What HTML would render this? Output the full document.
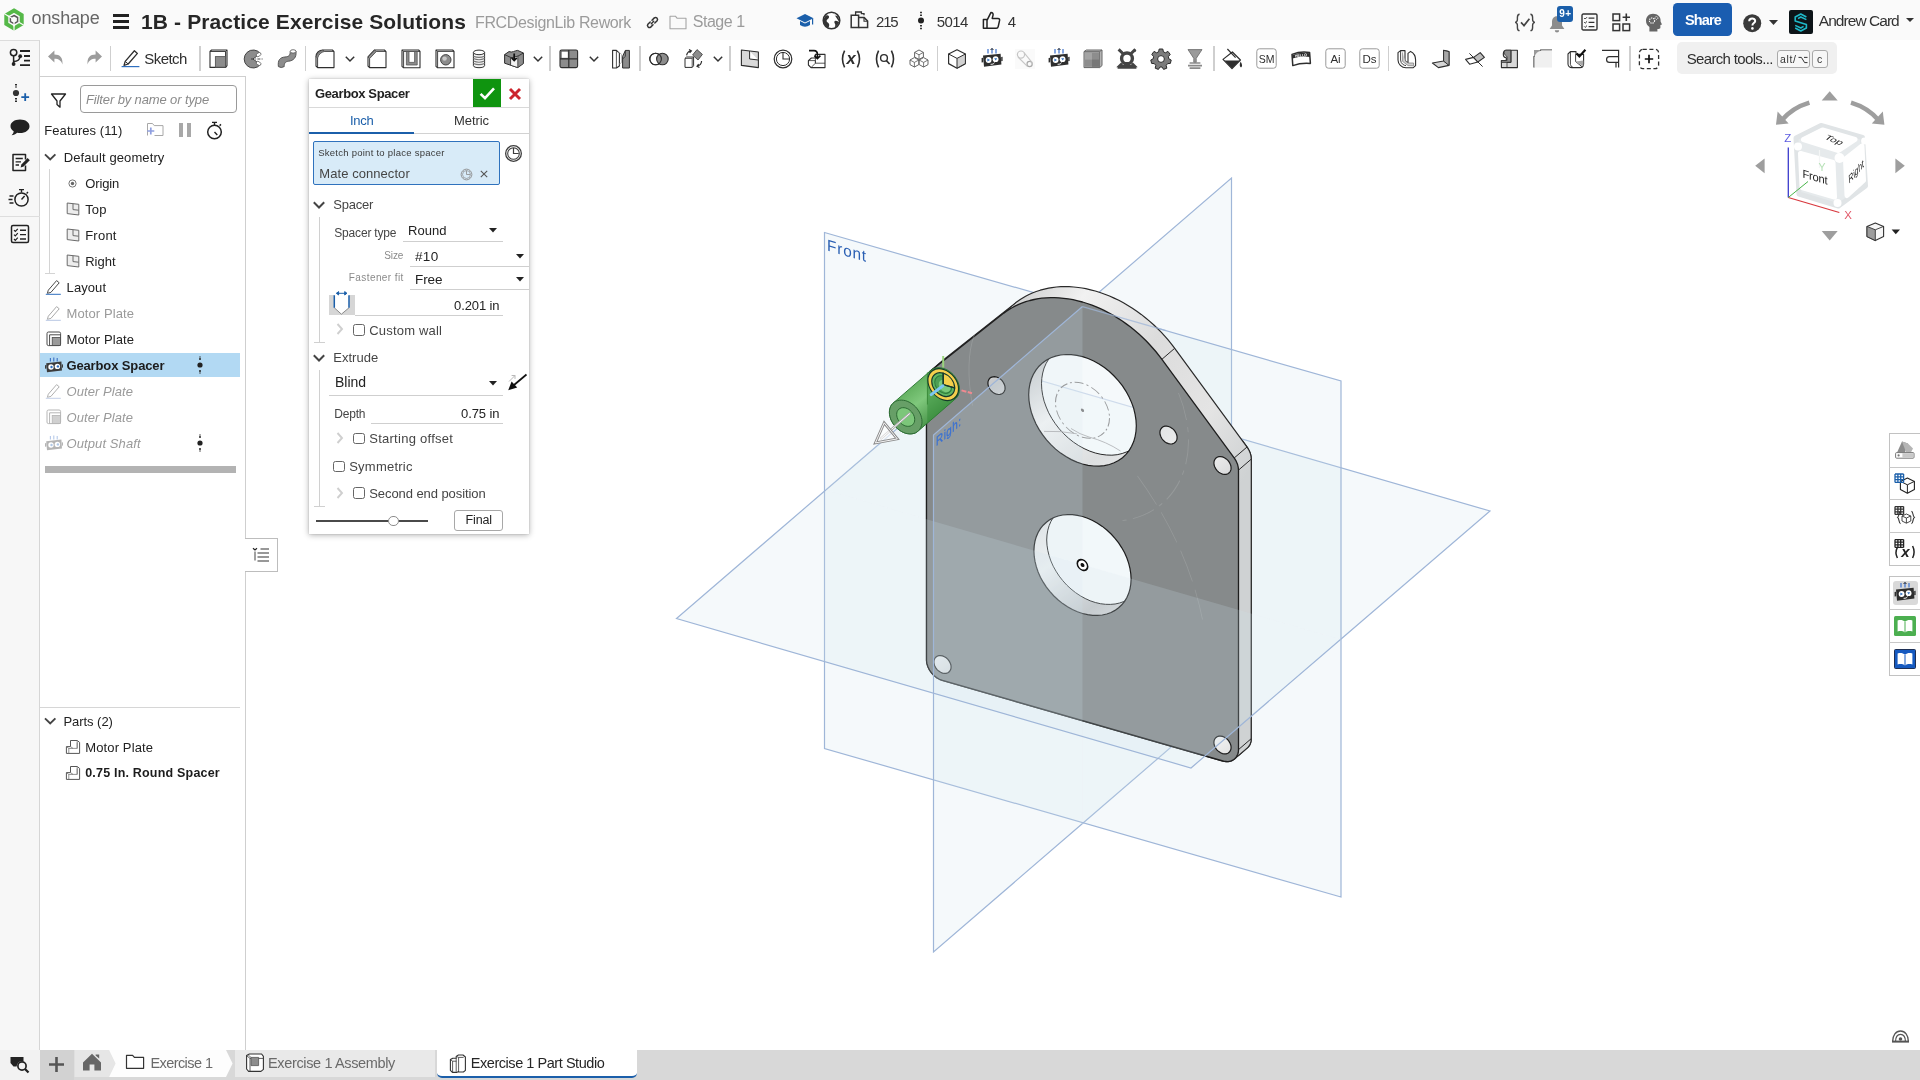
<!DOCTYPE html>
<html lang="en"><head><meta charset="utf-8"><title>1B - Practice Exercise Solutions | Exercise 1 Part Studio</title>
<style>
html,body{margin:0;padding:0;}
body{width:1920px;height:1080px;overflow:hidden;background:#fff;position:relative;font-family:"Liberation Sans",sans-serif;}
.a{position:absolute;box-sizing:border-box;}
.t{position:absolute;white-space:pre;line-height:1;}
svg{overflow:visible;}
svg text{font-family:"Liberation Sans",sans-serif;}
</style></head><body>
<div id="app" style="position:absolute;left:0;top:0;width:1920px;height:1080px;will-change:transform;">

<!-- 10_chrome -->
<div class="a" style="left:0px;top:0px;width:1920px;height:40px;background:#fafafa;"></div><div class="a" style="left:40px;top:40px;width:1880px;height:36px;background:#ffffff;"></div><div class="a" style="left:40px;top:76px;width:206px;height:1px;background:#cfcfcf;"></div><div class="a" style="left:0px;top:40px;width:40px;height:1040px;background:#f7f7f7;border-top:1px solid #dcdcdc;border-right:1px solid #d6d6d6;"></div><div class="a" style="left:0px;top:216px;width:40px;height:1px;background:#dedede;"></div><div class="a" style="left:40px;top:77px;width:206px;height:973px;background:#ffffff;border-right:1px solid #cfcfcf;"></div><div class="a" style="left:0px;top:1050px;width:1920px;height:30px;background:#e1e1e1;"></div><div class="a" style="left:0px;top:1050px;width:40px;height:30px;background:#f2f2f2;"></div>
<!-- 20_scene -->
<svg class="a" style="left:0;top:0" width="1920" height="1080" viewBox="0 0 1920 1080"><defs>
<linearGradient id="rimg" gradientUnits="userSpaceOnUse" x1="1000" y1="300" x2="1250" y2="470"><stop offset="0" stop-color="#c9caca"/><stop offset=".22" stop-color="#f1f1f1"/><stop offset=".5" stop-color="#dcdcdc"/><stop offset=".78" stop-color="#e4e4e4"/><stop offset="1" stop-color="#cfd2d3"/></linearGradient>
<linearGradient id="wallg" gradientUnits="userSpaceOnUse" x1="1030" y1="360" x2="1100" y2="455" spreadMethod="reflect"><stop offset="0" stop-color="#c4c6c8"/><stop offset=".5" stop-color="#f4f4f4"/><stop offset="1" stop-color="#dddfe0"/></linearGradient>
<path id="pHF" d="M1131.1 579.0 L1130.8 584.0 L1130.0 588.8 L1128.7 593.3 L1126.9 597.5 L1124.6 601.4 L1121.8 604.8 L1118.6 607.8 L1115.0 610.4 L1111.1 612.5 L1106.8 614.0 L1102.3 615.0 L1097.5 615.4 L1092.6 615.3 L1087.6 614.7 L1082.5 613.5 L1077.4 611.8 L1072.4 609.5 L1067.5 606.8 L1062.7 603.6 L1058.2 600.0 L1053.9 596.0 L1050.0 591.7 L1046.4 587.1 L1043.2 582.2 L1040.4 577.2 L1038.1 572.0 L1036.3 566.7 L1035.0 561.4 L1034.2 556.2 L1033.9 551.0 L1034.2 546.0 L1035.0 541.2 L1036.3 536.7 L1038.1 532.5 L1040.4 528.6 L1043.2 525.2 L1046.4 522.2 L1050.0 519.6 L1053.9 517.5 L1058.2 516.0 L1062.7 515.0 L1067.5 514.6 L1072.4 514.7 L1077.4 515.3 L1082.5 516.5 L1087.6 518.2 L1092.6 520.5 L1097.5 523.2 L1102.3 526.4 L1106.8 530.0 L1111.1 534.0 L1115.0 538.3 L1118.6 542.9 L1121.8 547.8 L1124.6 552.8 L1126.9 558.0 L1128.7 563.3 L1130.0 568.6 L1130.8 573.8Z M1136.3 425.8 L1136.0 431.3 L1135.1 436.6 L1133.7 441.6 L1131.6 446.3 L1129.1 450.6 L1126.0 454.4 L1122.5 457.7 L1118.5 460.6 L1114.1 462.8 L1109.4 464.5 L1104.4 465.7 L1099.1 466.2 L1093.7 466.0 L1088.1 465.3 L1082.5 464.0 L1076.9 462.1 L1071.3 459.6 L1065.9 456.6 L1060.6 453.1 L1055.6 449.1 L1050.9 444.7 L1046.5 439.9 L1042.5 434.7 L1039.0 429.4 L1035.9 423.8 L1033.4 418.0 L1031.3 412.2 L1029.9 406.3 L1029.0 400.5 L1028.7 394.8 L1029.0 389.3 L1029.9 384.0 L1031.3 379.0 L1033.4 374.3 L1035.9 370.1 L1039.0 366.2 L1042.5 362.9 L1046.5 360.1 L1050.9 357.8 L1055.6 356.1 L1060.6 355.0 L1065.9 354.5 L1071.3 354.6 L1076.9 355.3 L1082.5 356.6 L1088.1 358.5 L1093.7 361.0 L1099.1 364.0 L1104.4 367.6 L1109.4 371.5 L1114.1 376.0 L1118.5 380.8 L1122.5 385.9 L1126.0 391.3 L1129.1 396.9 L1131.6 402.6 L1133.7 408.4 L1135.1 414.3 L1136.0 420.1Z M1231.1 468.0 L1230.9 469.9 L1230.2 471.5 L1229.2 472.8 L1227.9 473.8 L1226.2 474.3 L1224.4 474.4 L1222.5 474.1 L1220.6 473.3 L1218.8 472.2 L1217.1 470.7 L1215.8 468.9 L1214.8 467.0 L1214.1 465.0 L1213.9 463.1 L1214.1 461.2 L1214.8 459.6 L1215.8 458.2 L1217.1 457.3 L1218.8 456.7 L1220.6 456.6 L1222.5 456.9 L1224.4 457.7 L1226.2 458.9 L1227.9 460.4 L1229.2 462.1 L1230.2 464.0 L1230.9 466.0Z M1231.1 747.4 L1230.9 749.3 L1230.2 750.9 L1229.2 752.3 L1227.9 753.2 L1226.2 753.8 L1224.4 753.9 L1222.5 753.6 L1220.6 752.8 L1218.8 751.6 L1217.1 750.1 L1215.8 748.4 L1214.8 746.5 L1214.1 744.5 L1213.9 742.5 L1214.1 740.6 L1214.8 739.0 L1215.8 737.7 L1217.1 736.7 L1218.8 736.2 L1220.6 736.1 L1222.5 736.4 L1224.4 737.2 L1226.2 738.3 L1227.9 739.8 L1229.2 741.6 L1230.2 743.5 L1230.9 745.5Z M951.1 666.9 L950.9 668.8 L950.2 670.4 L949.2 671.8 L947.9 672.7 L946.2 673.3 L944.4 673.4 L942.5 673.1 L940.6 672.3 L938.8 671.1 L937.1 669.6 L935.8 667.9 L934.8 666.0 L934.1 664.0 L933.9 662.0 L934.1 660.1 L934.8 658.5 L935.8 657.2 L937.1 656.2 L938.8 655.7 L940.6 655.6 L942.5 655.9 L944.4 656.7 L946.2 657.8 L947.9 659.3 L949.2 661.1 L950.2 663.0 L950.9 665.0Z M951.1 387.5 L950.9 389.4 L950.2 391.0 L949.2 392.3 L947.9 393.3 L946.2 393.8 L944.4 393.9 L942.5 393.6 L940.6 392.8 L938.8 391.7 L937.1 390.2 L935.8 388.4 L934.8 386.5 L934.1 384.5 L933.9 382.6 L934.1 380.7 L934.8 379.1 L935.8 377.7 L937.1 376.8 L938.8 376.2 L940.6 376.1 L942.5 376.4 L944.4 377.2 L946.2 378.4 L947.9 379.9 L949.2 381.6 L950.2 383.5 L950.9 385.5Z M1177.1 437.5 L1176.9 439.4 L1176.2 441.0 L1175.2 442.3 L1173.9 443.3 L1172.2 443.8 L1170.4 444.0 L1168.5 443.6 L1166.6 442.9 L1164.8 441.7 L1163.1 440.2 L1161.8 438.5 L1160.8 436.5 L1160.1 434.5 L1159.9 432.6 L1160.1 430.7 L1160.8 429.1 L1161.8 427.8 L1163.1 426.8 L1164.8 426.2 L1166.6 426.1 L1168.5 426.5 L1170.4 427.2 L1172.2 428.4 L1173.9 429.9 L1175.2 431.6 L1176.2 433.5 L1176.9 435.5Z M1005.1 388.1 L1004.9 389.9 L1004.2 391.5 L1003.2 392.9 L1001.9 393.8 L1000.2 394.4 L998.4 394.5 L996.5 394.2 L994.6 393.4 L992.8 392.2 L991.1 390.8 L989.8 389.0 L988.8 387.1 L988.1 385.1 L987.9 383.1 L988.1 381.3 L988.8 379.6 L989.8 378.3 L991.1 377.3 L992.8 376.8 L994.6 376.7 L996.5 377.0 L998.4 377.8 L1000.2 378.9 L1001.9 380.4 L1003.2 382.2 L1004.2 384.1 L1004.9 386.1Z"/><path id="pHB" d="M1143.9 568.0 L1143.6 573.0 L1142.8 577.8 L1141.5 582.3 L1139.7 586.5 L1137.4 590.4 L1134.6 593.8 L1131.4 596.8 L1127.8 599.4 L1123.9 601.5 L1119.6 603.0 L1115.1 604.0 L1110.3 604.4 L1105.4 604.3 L1100.4 603.7 L1095.3 602.5 L1090.2 600.8 L1085.2 598.5 L1080.3 595.8 L1075.5 592.6 L1071.0 589.0 L1066.7 585.0 L1062.8 580.7 L1059.2 576.1 L1056.0 571.2 L1053.2 566.2 L1050.9 561.0 L1049.1 555.7 L1047.8 550.4 L1047.0 545.2 L1046.7 540.0 L1047.0 535.0 L1047.8 530.2 L1049.1 525.7 L1050.9 521.5 L1053.2 517.6 L1056.0 514.2 L1059.2 511.2 L1062.8 508.6 L1066.7 506.5 L1071.0 505.0 L1075.5 504.0 L1080.3 503.6 L1085.2 503.7 L1090.2 504.3 L1095.3 505.5 L1100.4 507.2 L1105.4 509.5 L1110.3 512.2 L1115.1 515.4 L1119.6 519.0 L1123.9 523.0 L1127.8 527.3 L1131.4 531.9 L1134.6 536.8 L1137.4 541.8 L1139.7 547.0 L1141.5 552.3 L1142.8 557.6 L1143.6 562.8Z M1149.1 414.8 L1148.8 420.3 L1147.9 425.6 L1146.5 430.6 L1144.4 435.3 L1141.9 439.6 L1138.8 443.4 L1135.3 446.7 L1131.3 449.6 L1126.9 451.8 L1122.2 453.5 L1117.2 454.7 L1111.9 455.2 L1106.5 455.0 L1100.9 454.3 L1095.3 453.0 L1089.7 451.1 L1084.1 448.6 L1078.7 445.6 L1073.4 442.1 L1068.4 438.1 L1063.7 433.7 L1059.3 428.9 L1055.3 423.7 L1051.8 418.4 L1048.7 412.8 L1046.2 407.0 L1044.1 401.2 L1042.7 395.3 L1041.8 389.5 L1041.5 383.8 L1041.8 378.3 L1042.7 373.0 L1044.1 368.0 L1046.2 363.3 L1048.7 359.1 L1051.8 355.2 L1055.3 351.9 L1059.3 349.1 L1063.7 346.8 L1068.4 345.1 L1073.4 344.0 L1078.7 343.5 L1084.1 343.6 L1089.7 344.3 L1095.3 345.6 L1100.9 347.5 L1106.5 350.0 L1111.9 353.0 L1117.2 356.6 L1122.2 360.5 L1126.9 365.0 L1131.3 369.8 L1135.3 374.9 L1138.8 380.3 L1141.9 385.9 L1144.4 391.6 L1146.5 397.4 L1147.9 403.3 L1148.8 409.1Z M1243.9 457.0 L1243.7 458.9 L1243.0 460.5 L1242.0 461.8 L1240.7 462.8 L1239.0 463.3 L1237.2 463.4 L1235.3 463.1 L1233.4 462.3 L1231.6 461.2 L1229.9 459.7 L1228.6 457.9 L1227.6 456.0 L1226.9 454.0 L1226.7 452.1 L1226.9 450.2 L1227.6 448.6 L1228.6 447.2 L1229.9 446.3 L1231.6 445.7 L1233.4 445.6 L1235.3 445.9 L1237.2 446.7 L1239.0 447.9 L1240.7 449.4 L1242.0 451.1 L1243.0 453.0 L1243.7 455.0Z M1243.9 736.4 L1243.7 738.3 L1243.0 739.9 L1242.0 741.3 L1240.7 742.2 L1239.0 742.8 L1237.2 742.9 L1235.3 742.6 L1233.4 741.8 L1231.6 740.6 L1229.9 739.1 L1228.6 737.4 L1227.6 735.5 L1226.9 733.5 L1226.7 731.5 L1226.9 729.6 L1227.6 728.0 L1228.6 726.7 L1229.9 725.7 L1231.6 725.2 L1233.4 725.1 L1235.3 725.4 L1237.2 726.2 L1239.0 727.3 L1240.7 728.8 L1242.0 730.6 L1243.0 732.5 L1243.7 734.5Z M963.9 655.9 L963.7 657.8 L963.0 659.4 L962.0 660.8 L960.7 661.7 L959.0 662.3 L957.2 662.4 L955.3 662.1 L953.4 661.3 L951.6 660.1 L949.9 658.6 L948.6 656.9 L947.6 655.0 L946.9 653.0 L946.7 651.0 L946.9 649.1 L947.6 647.5 L948.6 646.2 L949.9 645.2 L951.6 644.7 L953.4 644.6 L955.3 644.9 L957.2 645.7 L959.0 646.8 L960.7 648.3 L962.0 650.1 L963.0 652.0 L963.7 654.0Z M963.9 376.5 L963.7 378.4 L963.0 380.0 L962.0 381.3 L960.7 382.3 L959.0 382.8 L957.2 382.9 L955.3 382.6 L953.4 381.8 L951.6 380.7 L949.9 379.2 L948.6 377.4 L947.6 375.5 L946.9 373.5 L946.7 371.6 L946.9 369.7 L947.6 368.1 L948.6 366.7 L949.9 365.8 L951.6 365.2 L953.4 365.1 L955.3 365.4 L957.2 366.2 L959.0 367.4 L960.7 368.9 L962.0 370.6 L963.0 372.5 L963.7 374.5Z M1189.9 426.5 L1189.7 428.4 L1189.0 430.0 L1188.0 431.3 L1186.7 432.3 L1185.0 432.8 L1183.2 433.0 L1181.3 432.6 L1179.4 431.9 L1177.6 430.7 L1175.9 429.2 L1174.6 427.5 L1173.6 425.5 L1172.9 423.5 L1172.7 421.6 L1172.9 419.7 L1173.6 418.1 L1174.6 416.8 L1175.9 415.8 L1177.6 415.2 L1179.4 415.1 L1181.3 415.5 L1183.2 416.2 L1185.0 417.4 L1186.7 418.9 L1188.0 420.6 L1189.0 422.5 L1189.7 424.5Z M1017.9 377.1 L1017.7 378.9 L1017.0 380.5 L1016.0 381.9 L1014.7 382.8 L1013.0 383.4 L1011.2 383.5 L1009.3 383.2 L1007.4 382.4 L1005.6 381.2 L1003.9 379.8 L1002.6 378.0 L1001.6 376.1 L1000.9 374.1 L1000.7 372.1 L1000.9 370.3 L1001.6 368.6 L1002.6 367.3 L1003.9 366.3 L1005.6 365.8 L1007.4 365.7 L1009.3 366.0 L1011.2 366.8 L1013.0 367.9 L1014.7 369.4 L1016.0 371.2 L1017.0 373.1 L1017.7 375.1Z"/><path id="pFO" d="M926.5 380.4 L926.8 377.6 L927.5 375.1 L928.1 374.0 L928.8 372.9 L929.6 371.8 L930.5 371.0 L1003.8 313.1 L1006.5 311.2 L1009.2 309.4 L1012.0 307.7 L1015.0 306.1 L1018.7 304.4 L1021.8 303.1 L1025.8 301.7 L1029.9 300.5 L1034.1 299.5 L1038.4 298.7 L1041.9 298.2 L1046.3 297.8 L1050.8 297.6 L1054.4 297.6 L1059.0 297.8 L1063.7 298.3 L1068.3 298.9 L1073.0 299.7 L1077.8 300.8 L1082.5 302.0 L1087.2 303.5 L1092.0 305.2 L1095.7 306.6 L1100.4 308.7 L1104.1 310.4 L1108.7 312.8 L1113.3 315.3 L1117.8 318.1 L1122.3 321.0 L1126.6 324.1 L1130.9 327.3 L1135.1 330.7 L1139.2 334.3 L1142.4 337.2 L1146.3 341.0 L1150.0 345.0 L1155.8 351.5 L1161.2 358.4 L1234.5 458.4 L1236.2 461.2 L1237.5 464.2 L1238.2 467.1 L1238.5 470.1 L1238.5 749.8 L1238.4 751.3 L1238.2 752.8 L1237.8 754.2 L1237.2 755.4 L1236.6 756.6 L1235.8 757.7 L1234.8 758.7 L1233.8 759.5 L1232.7 760.2 L1231.4 760.8 L1230.1 761.2 L1228.8 761.5 L1227.3 761.6 L1225.8 761.5 L1224.3 761.4 L1222.8 761.0 L942.5 680.4 L939.4 679.3 L936.5 677.6 L933.9 675.5 L931.5 672.9 L929.5 670.0 L928.0 667.0 L927.0 663.9 L926.7 662.3 L926.5 660.7Z"/>
<clipPath id="cpHolesF"><use href="#pHF"/></clipPath>
<mask id="mFront" maskUnits="userSpaceOnUse" x="900" y="280" width="380" height="500"><rect x="900" y="280" width="380" height="500" fill="#fff"/><use href="#pHF" fill="#000"/></mask>
<mask id="mWall" maskUnits="userSpaceOnUse" x="900" y="280" width="380" height="500"><use href="#pHF" fill="#fff"/><use href="#pHB" fill="#000"/></mask>
<mask id="mSweep" maskUnits="userSpaceOnUse" x="900" y="270" width="380" height="510"><rect x="900" y="270" width="380" height="510" fill="#fff"/><g clip-path="url(#cpHolesF)"><use href="#pHB" fill="#000"/></g></mask>
<clipPath id="cpRight"><rect x="1238.5" y="440" width="20" height="330"/></clipPath>
</defs>
<polygon points="1082.5,306.5 1231.5,178.0 1231.5,695.0 1082.5,823.5" fill="rgba(207,225,235,0.2)"/>
<polygon points="825.8,490.0 975.0,361.5 1490.0,511.0 1340.5,639.5" fill="rgba(207,225,235,0.2)"/>
<polyline points="1082.5,306.5 1231.5,178.0 1231.5,695.0 1082.5,823.5" fill="none" stroke="#9fb6d8" stroke-width="1.2"/>
<polyline points="825.8,490.0 975.0,361.5 1490.0,511.0 1340.5,639.5" fill="none" stroke="#9fb6d8" stroke-width="1.2"/>
<polygon points="824.5,232.5 1341.0,381.0 1341.0,897.0 824.5,748.5" fill="rgba(207,225,235,0.2)" stroke="#9fb6d8" stroke-width="1.2"/>
<path id="pSW" d="M926.5 380.4 L926.7 378.3 L927.2 376.1 L928.0 374.1 L929.2 372.4 L930.3 371.2 L943.3 360.0 L1015.9 302.6 L1020.6 299.3 L1025.6 296.3 L1028.5 294.8 L1032.3 293.0 L1036.2 291.5 L1040.2 290.2 L1044.4 289.1 L1048.6 288.1 L1052.0 287.6 L1056.4 287.0 L1060.9 286.7 L1065.4 286.6 L1069.1 286.7 L1073.7 287.0 L1078.3 287.5 L1082.1 288.0 L1085.8 288.7 L1090.6 289.8 L1095.3 291.0 L1100.0 292.5 L1104.8 294.2 L1109.5 296.0 L1114.1 298.1 L1118.8 300.3 L1123.4 302.8 L1127.9 305.4 L1132.4 308.2 L1136.8 311.2 L1141.2 314.4 L1145.4 317.7 L1149.5 321.1 L1153.6 324.7 L1157.5 328.5 L1161.4 332.4 L1165.0 336.4 L1167.9 339.7 L1171.3 343.9 L1174.0 347.4 L1247.3 447.4 L1249.0 450.2 L1250.3 453.2 L1251.0 456.1 L1251.3 459.1 L1251.2 739.9 L1250.9 741.9 L1250.3 743.8 L1249.5 745.4 L1248.4 746.9 L1247.4 747.9 L1234.1 759.3 L1233.0 760.0 L1231.8 760.6 L1230.5 761.1 L1229.1 761.4 L1227.7 761.6 L1226.2 761.6 L1224.7 761.4 L1223.2 761.1 L942.2 680.4 L939.2 679.1 L936.2 677.4 L933.6 675.1 L931.2 672.5 L929.2 669.6 L927.8 666.5 L926.8 663.3 L926.6 661.7 L926.5 660.1Z" fill="url(#rimg)" stroke="#2a2a2a" stroke-width="1.2" stroke-linejoin="round" mask="url(#mSweep)"/>
<use href="#pSW" clip-path="url(#cpRight)" fill="#c3c7c9" stroke="none" style="fill:#c3c7c9"/>
<use href="#pHF" fill="#fff" fill-opacity=".45"/>
<rect x="900" y="280" width="380" height="500" fill="url(#wallg)" mask="url(#mWall)"/>
<use href="#pHB" fill="none" stroke="#2a2a2a" stroke-width="1" clip-path="url(#cpHolesF)"/>
<path d="M930.8 370.8l12.8 -11M1003.1 313.6l12.8 -11M1161.9 359.3l12.8 -11M1234.2 458.0l12.8 -11M1238.5 470.1l12.8 -11M1238.5 749.6l12.8 -11" stroke="#2a2a2a" stroke-width="1" fill="none"/>
<use href="#pFO" fill="#868a8b" mask="url(#mFront)"/>
<use href="#pFO" fill="none" stroke="#1e1e1e" stroke-width="1.3" stroke-linejoin="round"/>
<use href="#pHF" fill="none" stroke="#1e1e1e" stroke-width="1.2"/>
<path d="M1082.5 306.6L1166 330.6" stroke="#9fb6d8" stroke-width="1.2" stroke-opacity=".75" fill="none"/>
<g transform="matrix(1 0.2875 0 0.998 1082.5 565)" fill="none" stroke="#b9bcbe" stroke-opacity=".3" stroke-width=".9"><path d="M96 -200A107 107 0 0 1 40 -56" stroke-dasharray="26 7 5 7"/><path d="M55 -105Q105 -50 120 20" stroke-dasharray="30 8"/><path d="M-108 -200Q-118 -170 -110 -128"/></g>
<polygon points="933.5,435.0 1082.5,306.5 1082.5,823.5 933.5,952.0" fill="rgba(207,225,235,0.2)"/>
<polygon points="676.5,618.5 825.8,490.0 1340.5,639.5 1191.0,768.0" fill="rgba(207,225,235,0.2)"/>
<polyline points="1082.5,306.5 933.5,435.0 933.5,952.0 1082.5,823.5" fill="none" stroke="#9fb6d8" stroke-width="1.2"/>
<polyline points="825.8,490.0 676.5,618.5 1191.0,768.0 1340.5,639.5" fill="none" stroke="#9fb6d8" stroke-width="1.2"/></svg>
<!-- 21_spacer -->
<svg class="a" style="left:0;top:0" width="1920" height="1080" viewBox="0 0 1920 1080"><defs><linearGradient id="cylg" gradientUnits="userSpaceOnUse" x1="912" y1="385" x2="936" y2="416"><stop offset="0" stop-color="#62b05f"/><stop offset=".45" stop-color="#7fc87c"/><stop offset="1" stop-color="#4f9a4f"/></linearGradient><clipPath id="cpPl"><rect x="927.3" y="340" width="60" height="100"/></clipPath></defs>
<path d="M889.4 412.3 L889.5 410.2 L889.7 409.2 L890.3 407.3 L890.6 406.4 L891.6 404.8 L892.8 403.4 L930.9 370.4 L931.7 369.8 L933.3 368.8 L935.1 368.2 L937.0 367.8 L939.0 367.7 L941.1 367.9 L943.2 368.3 L945.3 369.1 L947.4 370.1 L949.4 371.4 L951.4 372.9 L953.1 374.5 L954.7 376.4 L956.1 378.4 L957.3 380.5 L958.3 382.7 L958.9 384.9 L959.4 387.1 L959.5 389.3 L959.4 391.4 L958.9 393.3 L958.6 394.3 L957.8 396.0 L957.3 396.8 L956.1 398.2 L918.0 431.2 L916.4 432.3 L915.6 432.8 L913.9 433.4 L911.9 433.8 L909.9 433.9 L907.8 433.7 L905.7 433.3 L903.6 432.5 L901.5 431.5 L899.5 430.2 L897.6 428.7 L895.8 427.1 L894.2 425.2 L892.8 423.2 L891.6 421.1 L890.6 418.9 L890.0 416.7 L889.5 414.5Z" fill="url(#cylg)" stroke="#2f7a36" stroke-width="1" stroke-linejoin="round"/>
<path d="M889.4 412.3 L889.5 410.2 L889.7 409.2 L890.3 407.3 L890.6 406.4 L891.6 404.8 L892.8 403.4 L930.9 370.4 L931.7 369.8 L933.3 368.8 L935.1 368.2 L937.0 367.8 L939.0 367.7 L941.1 367.9 L943.2 368.3 L945.3 369.1 L947.4 370.1 L949.4 371.4 L951.4 372.9 L953.1 374.5 L954.7 376.4 L956.1 378.4 L957.3 380.5 L958.3 382.7 L958.9 384.9 L959.4 387.1 L959.5 389.3 L959.4 391.4 L958.9 393.3 L958.6 394.3 L957.8 396.0 L957.3 396.8 L956.1 398.2 L918.0 431.2 L916.4 432.3 L915.6 432.8 L913.9 433.4 L911.9 433.8 L909.9 433.9 L907.8 433.7 L905.7 433.3 L903.6 432.5 L901.5 431.5 L899.5 430.2 L897.6 428.7 L895.8 427.1 L894.2 425.2 L892.8 423.2 L891.6 421.1 L890.6 418.9 L890.0 416.7 L889.5 414.5Z" fill="#2f8a36" fill-opacity=".5" clip-path="url(#cpPl)"/>
<path d="M927.4 372.5V404.5" stroke="#3b8a3b" stroke-width="1"/>
<path d="M922.0 421.7 L921.9 423.8 L921.4 425.7 L920.8 427.6 L919.8 429.2 L918.6 430.6 L917.2 431.8 L915.6 432.8 L913.9 433.4 L911.9 433.8 L909.9 433.9 L907.8 433.7 L905.7 433.3 L903.6 432.5 L901.5 431.5 L899.5 430.2 L897.6 428.7 L895.8 427.1 L894.2 425.2 L892.8 423.2 L891.6 421.1 L890.6 418.9 L890.0 416.7 L889.5 414.5 L889.4 412.3 L889.5 410.2 L890.0 408.3 L890.6 406.4 L891.6 404.8 L892.8 403.4 L894.2 402.2 L895.8 401.2 L897.6 400.6 L899.5 400.2 L901.5 400.1 L903.6 400.3 L905.7 400.7 L907.8 401.5 L909.9 402.5 L911.9 403.8 L913.9 405.3 L915.6 406.9 L917.2 408.8 L918.6 410.8 L919.8 412.9 L920.8 415.1 L921.4 417.3 L921.9 419.5Z" fill="#679f67" stroke="#2c6a33" stroke-width="1"/>
<path d="M914.7 419.6 L914.6 421.1 L914.2 422.5 L913.5 423.7 L912.6 424.8 L911.5 425.5 L910.2 426.1 L908.8 426.3 L907.3 426.3 L905.7 426.0 L904.1 425.4 L902.6 424.6 L901.2 423.5 L899.9 422.2 L898.8 420.8 L897.9 419.3 L897.2 417.6 L896.8 416.0 L896.7 414.4 L896.8 412.9 L897.2 411.5 L897.9 410.3 L898.8 409.2 L899.9 408.5 L901.2 407.9 L902.6 407.7 L904.1 407.7 L905.7 408.0 L907.3 408.6 L908.8 409.4 L910.2 410.5 L911.5 411.8 L912.6 413.2 L913.5 414.7 L914.2 416.4 L914.6 418.0Z" fill="#7cc67a" stroke="#2c6a33" stroke-width="1"/>
<path d="M909.5 413.7L881 438.5" stroke="#a9a9a9" stroke-width="2.4" stroke-linecap="round"/><path d="M909.5 413.7L881 438.5" stroke="#fff" stroke-width=".9" stroke-linecap="round"/>
<path d="M884.2 422.8L897.3 438.9L875.4 442.9Z" fill="#fff" fill-opacity=".6" stroke="#8c8c8c" stroke-width="2.8" stroke-linejoin="miter"/><path d="M884.2 422.8L897.3 438.9L875.4 442.9Z" fill="none" stroke="#fff" stroke-width=".9"/>
<g transform="matrix(1 0.2875 0 0.998 943.2 384.6)">
<circle r="12" fill="#5fb562"/><circle r="8.5" fill="#4d9f55" stroke="#2d7d3c" stroke-width="1"/><circle cx="1.5" cy="1" r="6" fill="#79c97b"/>
<path d="M0 0L0 -13.4A13.4 13.4 0 0 1 13.4 0Z" fill="#f4cf4c" stroke="#163a2c" stroke-width="1.3" stroke-linejoin="round"/>
<circle r="13.4" fill="none" stroke="#163a2c" stroke-width="5"/><circle r="13.4" fill="none" stroke="#f4cf4c" stroke-width="2.7"/>
<path d="M0 0L0 -12M0 0L12 0" stroke="#163a2c" stroke-width="1.3" fill="none"/>
</g>
<path d="M943.2 356V367.5" stroke="#9ad57c" stroke-width="2"/>
<path d="M943 385.8L931.2 394.6" stroke="#7cc6f2" stroke-width="3" stroke-linecap="round"/>
<path d="M961.5 390.4L972 393.2" stroke="#f08a90" stroke-width="2" stroke-dasharray="5 1.5"/>
<text transform="matrix(.961 .276 0 1 827 250.5)" font-size="16" fill="#2b60b4" letter-spacing=".85">Front</text>
<text transform="matrix(.757 -.653 0 1 936 446.6)" font-size="13" fill="#3b72d2" stroke="#3b72d2" stroke-width=".3" letter-spacing=".7">Righ:</text>
<g transform="matrix(1 0.2875 0 0.998 1082.5 565)" fill="none">
<circle cx="0" cy="-155" r="27" stroke="#9a9c9e" stroke-width="1" stroke-dasharray="9 3 2 3"/><circle cx="0" cy="-155" r="1.6" fill="#8c8e90"/>
</g><path d="M1044 431.4Q1060 430.6 1076.8 433.8M1071 428.5Q1080 434.5 1089 437Q1106 441.5 1120.5 451" stroke="#b4b7ba" stroke-width=".9" fill="none"/><g transform="matrix(1 0.2875 0 0.998 1082.5 565)" fill="none">
<circle r="5.2" stroke="#111" stroke-width="1.6" fill="#fff"/><circle r="2" fill="#111"/>
</g></svg>
<!-- 30_tree -->
<svg class="a" style="left:50px;top:92px;" width="17" height="17" viewBox="0 0 17 17"><path d="M1.5 2H15.5L10 9V15.2L7 12.6V9Z" fill="none" stroke="#222" stroke-width="1.3" stroke-linejoin="round"/></svg><div class="a" style="left:79.5px;top:84.5px;width:157px;height:28.5px;background:#fff;border:1px solid #9a9a9a;border-radius:4px;"></div><span class="t" style="left:86.00px;top:93.30px;font-size:13px;color:#8a8a8a;letter-spacing:-0.124px;font-style:italic;">Filter by name or type</span><span class="t" style="left:44.30px;top:123.60px;font-size:13px;color:#222;letter-spacing:0.071px;">Features (11)</span><svg class="a" style="left:145px;top:121px;" width="20" height="17" viewBox="0 0 20 17"><path d="M2.5 14.5V2.5H7.5L9.2 4.6H18V14.5H9.5" fill="none" stroke="#a8a8a8" stroke-width="1"/><path d="M5.8 6.5V13.5M2.3 10H9.3" stroke="#8f9fe0" stroke-width="1.7"/></svg><div class="a" style="left:179.2px;top:123.3px;width:3.6px;height:13.4px;background:#a8a8a8;"></div><div class="a" style="left:187px;top:123.3px;width:3.6px;height:13.4px;background:#a8a8a8;"></div><svg class="a" style="left:205px;top:120.5px;" width="19" height="19" viewBox="0 0 19 19"><circle cx="9.5" cy="11" r="6.8" fill="none" stroke="#222" stroke-width="1.5"/><path d="M7 1.4H12M9.5 1.4V4M14.6 4.6L16 3.4M9.5 11L12.3 14" stroke="#222" stroke-width="1.4" fill="none"/></svg><svg class="a" style="left:44px;top:153px;" width="12.5" height="8.5" viewBox="0 0 12.5 8.5"><path d="M1 1.3L6.2 6.5L11.4 1.3" fill="none" stroke="#444" stroke-width="1.9"/></svg><div class="a" style="left:49.3px;top:169px;width:1px;height:105px;background:#d4d4d4;"></div><div class="a" style="left:45px;top:273.3px;width:9.5px;height:1px;background:#d4d4d4;"></div><span class="t" style="left:63.70px;top:150.65px;font-size:13px;color:#222;letter-spacing:0.113px;">Default geometry</span><svg class="a" style="left:67.5px;top:178.5px;" width="9" height="9" viewBox="0 0 9 9"><circle cx="4.5" cy="4.5" r="3.6" fill="#fff" stroke="#666" stroke-width=".9"/><circle cx="4.5" cy="4.5" r="1.7" fill="#666"/></svg><span class="t" style="left:85.20px;top:176.65px;font-size:13px;color:#222;letter-spacing:-0.113px;">Origin</span><svg class="a" style="left:65.5px;top:201.5px;" width="14" height="14" viewBox="0 0 14 14"><path d="M1.2 1L12.8 2.3V13L1.2 11.6Z" fill="#ededed" stroke="#6b6b6b" stroke-width="1"/><path d="M7 1.8V7.6L12.6 8.2" fill="none" stroke="#6b6b6b" stroke-width="1"/></svg><span class="t" style="left:85.20px;top:202.65px;font-size:13px;color:#222;letter-spacing:0.180px;">Top</span><svg class="a" style="left:65.5px;top:227.5px;" width="14" height="14" viewBox="0 0 14 14"><path d="M1.2 1L12.8 2.3V13L1.2 11.6Z" fill="#ededed" stroke="#6b6b6b" stroke-width="1"/><path d="M7 1.8V7.6L12.6 8.2" fill="none" stroke="#6b6b6b" stroke-width="1"/></svg><span class="t" style="left:85.20px;top:228.65px;font-size:13px;color:#222;letter-spacing:0.231px;">Front</span><svg class="a" style="left:65.5px;top:253.5px;" width="14" height="14" viewBox="0 0 14 14"><path d="M1.2 1L12.8 2.3V13L1.2 11.6Z" fill="#ededed" stroke="#6b6b6b" stroke-width="1"/><path d="M7 1.8V7.6L12.6 8.2" fill="none" stroke="#6b6b6b" stroke-width="1"/></svg><span class="t" style="left:85.20px;top:254.65px;font-size:13px;color:#222;letter-spacing:0.030px;">Right</span><svg class="a" style="left:45px;top:278.5px;" width="17" height="16" viewBox="0 0 17 16"><path d="M3.3 11.2L11.6 1.6L14.2 3.8L5.9 13.4L2.4 14.3Z" fill="none" stroke="#4a4a4a" stroke-width="1" stroke-linejoin="round"/><path d="M.8 15.3H15.8" stroke="#2f6fbf" stroke-width="1"/></svg><span class="t" style="left:66.60px;top:280.65px;font-size:13px;color:#222;letter-spacing:0.078px;">Layout</span><svg class="a" style="left:45px;top:304.5px;" width="17" height="16" viewBox="0 0 17 16"><path d="M3.3 11.2L11.6 1.6L14.2 3.8L5.9 13.4L2.4 14.3Z" fill="none" stroke="#a9a9a9" stroke-width="1" stroke-linejoin="round"/><path d="M.8 15.3H15.8" stroke="#b7c6e3" stroke-width="1"/></svg><span class="t" style="left:66.60px;top:306.65px;font-size:13px;color:#9a9a9a;letter-spacing:0.093px;">Motor Plate</span><svg class="a" style="left:45.5px;top:331px;" width="16" height="16" viewBox="0 0 16 16"><rect x="1" y="1" width="13.6" height="13.6" rx="1.5" fill="#fff" stroke="#4a4a4a" stroke-width="1"/><path d="M3.6 14.4V3.8H14.4" fill="none" stroke="#4a4a4a" stroke-width="1"/><rect x="6.2" y="6.4" width="8.2" height="8" fill="#9a9a9a" stroke="#4a4a4a" stroke-width=".8"/></svg><span class="t" style="left:66.60px;top:332.65px;font-size:13px;color:#222;letter-spacing:0.093px;">Motor Plate</span><div class="a" style="left:40px;top:353px;width:200px;height:24px;background:#b2d9f3;"></div><svg class="a" style="left:44.5px;top:356.5px;" width="18" height="17" viewBox="0 0 18 17"><g opacity="1"><path d="M5.4 1V4.4M8.8 .6V4.4M12.2 1V4.4" stroke="#3d6fc4" stroke-width="1.1"/><path d="M1.2 6.2L16.4 4.6L17 13.4L2 15.2Z" fill="#3c3c3c"/><circle cx="6" cy="10" r="2.7" fill="#fff"/><circle cx="12.4" cy="9.4" r="2.7" fill="#fff"/><circle cx="6.5" cy="10" r="1.2" fill="#2f6fbf"/><circle cx="12.9" cy="9.4" r="1.2" fill="#2f6fbf"/><path d="M0 8.2l1.4 -.2v3.6l-1.4 .2zM17 7.4l1 -.2v3.4l-1 .2z" fill="#3c3c3c"/></g></svg><span class="t" style="left:66.40px;top:358.65px;font-size:13px;color:#1c1c1c;letter-spacing:-0.123px;font-weight:700;">Gearbox Spacer</span><svg class="a" style="left:197px;top:356px;" width="6" height="18" viewBox="0 0 6 18"><circle cx="3" cy="9" r="2.6" fill="#222"/><circle cx="3" cy="3" r="1" fill="#222"/><circle cx="3" cy="15" r="1" fill="#222"/><circle cx="3" cy="1" r=".7" fill="#222"/><circle cx="3" cy="17" r=".7" fill="#222"/></svg><svg class="a" style="left:45px;top:382.5px;" width="17" height="16" viewBox="0 0 17 16"><path d="M3.3 11.2L11.6 1.6L14.2 3.8L5.9 13.4L2.4 14.3Z" fill="none" stroke="#b0b0b0" stroke-width="1" stroke-linejoin="round"/><path d="M.8 15.3H15.8" stroke="#c4cfe6" stroke-width="1"/></svg><span class="t" style="left:66.60px;top:384.65px;font-size:13px;color:#9a9a9a;letter-spacing:0.067px;font-style:italic;">Outer Plate</span><svg class="a" style="left:45.5px;top:409px;" width="16" height="16" viewBox="0 0 16 16"><rect x="1" y="1" width="13.6" height="13.6" rx="1.5" fill="#fff" stroke="#b5b5b5" stroke-width="1"/><path d="M3.6 14.4V3.8H14.4" fill="none" stroke="#b5b5b5" stroke-width="1"/><rect x="6.2" y="6.4" width="8.2" height="8" fill="#d0d0d0" stroke="#b5b5b5" stroke-width=".8"/></svg><span class="t" style="left:66.60px;top:410.65px;font-size:13px;color:#9a9a9a;letter-spacing:0.067px;font-style:italic;">Outer Plate</span><svg class="a" style="left:44.5px;top:434.5px;" width="18" height="17" viewBox="0 0 18 17"><g opacity="0.38"><path d="M5.4 1V4.4M8.8 .6V4.4M12.2 1V4.4" stroke="#3d6fc4" stroke-width="1.1"/><path d="M1.2 6.2L16.4 4.6L17 13.4L2 15.2Z" fill="#3c3c3c"/><circle cx="6" cy="10" r="2.7" fill="#fff"/><circle cx="12.4" cy="9.4" r="2.7" fill="#fff"/><circle cx="6.5" cy="10" r="1.2" fill="#2f6fbf"/><circle cx="12.9" cy="9.4" r="1.2" fill="#2f6fbf"/><path d="M0 8.2l1.4 -.2v3.6l-1.4 .2zM17 7.4l1 -.2v3.4l-1 .2z" fill="#3c3c3c"/></g></svg><span class="t" style="left:66.60px;top:436.65px;font-size:13px;color:#9a9a9a;letter-spacing:0.084px;font-style:italic;">Output Shaft</span><svg class="a" style="left:197px;top:434px;" width="6" height="18" viewBox="0 0 6 18"><circle cx="3" cy="9" r="2.6" fill="#222"/><circle cx="3" cy="3" r="1" fill="#222"/><circle cx="3" cy="15" r="1" fill="#222"/><circle cx="3" cy="1" r=".7" fill="#222"/><circle cx="3" cy="17" r=".7" fill="#222"/></svg><div class="a" style="left:45px;top:466px;width:190.5px;height:6.5px;background:#b3b3b3;"></div><div class="a" style="left:40px;top:707px;width:200px;height:1px;background:#d6d6d6;"></div><svg class="a" style="left:44px;top:717px;" width="12.5" height="8.5" viewBox="0 0 12.5 8.5"><path d="M1 1.3L6.2 6.5L11.4 1.3" fill="none" stroke="#444" stroke-width="1.9"/></svg><span class="t" style="left:63.40px;top:714.80px;font-size:13px;color:#222;letter-spacing:-0.038px;">Parts (2)</span><svg class="a" style="left:64.5px;top:739px;" width="16" height="16" viewBox="0 0 16 16"><path d="M5.5 1.5H12.2L14.6 3.4V14.4H1.4V7.6H5.5Z" fill="#fff" stroke="#555" stroke-width="1" stroke-linejoin="round"/><path d="M5.5 7.6L8 9.4H12.2V3.4M12.2 9.4V1.5M1.4 7.6L3.8 9.4V14.4M3.8 9.4H8" fill="none" stroke="#777" stroke-width=".8"/></svg><span class="t" style="left:85.20px;top:741.00px;font-size:13px;color:#222;letter-spacing:0.138px;">Motor Plate</span><svg class="a" style="left:64.5px;top:765px;" width="16" height="16" viewBox="0 0 16 16"><path d="M5.5 1.5H12.2L14.6 3.4V14.4H1.4V7.6H5.5Z" fill="#fff" stroke="#555" stroke-width="1" stroke-linejoin="round"/><path d="M5.5 7.6L8 9.4H12.2V3.4M12.2 9.4V1.5M1.4 7.6L3.8 9.4V14.4M3.8 9.4H8" fill="none" stroke="#777" stroke-width=".8"/></svg><span class="t" style="left:85.20px;top:767.22px;font-size:12.5px;color:#1c1c1c;letter-spacing:0.196px;font-weight:700;">0.75 In. Round Spacer</span><div class="a" style="left:245px;top:538px;width:33px;height:33.5px;background:#fff;border:1px solid #bdbdbd;border-left:none;"></div><svg class="a" style="left:252px;top:546.2px;" width="18" height="16" viewBox="0 0 18 16"><path d="M1 2.2L3 4L5 2.2" fill="none" stroke="#222" stroke-width="1.2"/><path d="M3 5.5V14.6" stroke="#8a8a8a" stroke-width="1.6"/><path d="M8.5 3H17M5.5 7H17M5.5 11H17M5.5 15H17" stroke="#333" stroke-width="1.1"/></svg><svg class="a" style="left:8px;top:46px;" width="26" height="24" viewBox="0 0 26 24"><circle cx="5.6" cy="6.6" r="3.2" fill="none" stroke="#222" stroke-width="1.5"/><path d="M5.6 9.8V17M5.6 15.6Q11.5 15.2 12 11" fill="none" stroke="#222" stroke-width="1.5"/><circle cx="5.6" cy="18" r="1.9" fill="#222"/><circle cx="12.2" cy="10.2" r="1.9" fill="#222"/><path d="M12 5H22M16 10H22M16 14.6H22M12 19.2H22" stroke="#222" stroke-width="1.8"/></svg><svg class="a" style="left:10px;top:82px;" width="22" height="24" viewBox="0 0 22 24"><circle cx="6" cy="11" r="3.1" fill="#333"/><path d="M6 2V5.5M6 16V20" stroke="#222" stroke-width="1.9" stroke-dasharray="1.5 1.1"/><path d="M15.2 11.2V19M11.3 15.1H19.1" stroke="#1b5faa" stroke-width="1.8"/></svg><svg class="a" style="left:9px;top:118px;" width="22" height="19" viewBox="0 0 22 19"><path d="M11 1.5C16.6 1.5 20.5 4.4 20.5 8.2S16.6 15 11 15C10 15 9 14.9 8.1 14.7C6.6 16.2 4.6 17 2.6 17.2C3.8 16.2 4.6 14.8 4.7 13.3C2.7 12.1 1.5 10.2 1.5 8.2C1.5 4.4 5.4 1.5 11 1.5Z" fill="#222"/></svg><svg class="a" style="left:10px;top:152px;" width="21" height="21" viewBox="0 0 21 21"><path d="M15.5 7.6V2.5H3V18.5H15.5V13.6" fill="none" stroke="#222" stroke-width="1.5" stroke-linejoin="round"/><path d="M5.6 6.5H12.8M5.6 9.8H11M5.6 13H9" stroke="#222" stroke-width="1.3"/><path d="M10.6 15.4L11.4 12.4L17.6 6L19.8 8.2L13.6 14.6Z" fill="#222"/></svg><svg class="a" style="left:8px;top:187px;" width="24" height="22" viewBox="0 0 24 22"><circle cx="13.5" cy="12.5" r="6.6" fill="none" stroke="#222" stroke-width="1.5"/><path d="M11 2.6H16M13.5 2.6V5.6M18.6 6.4L20 5M13.5 12.5L16.6 9" stroke="#222" stroke-width="1.4" fill="none"/><path d="M1.5 9H5.5M.5 12.5H4.5M1.5 16H5.5" stroke="#222" stroke-width="1.3"/></svg><svg class="a" style="left:10px;top:224px;" width="20" height="20" viewBox="0 0 20 20"><rect x="1.5" y="1.5" width="17" height="17" rx="1.5" fill="none" stroke="#222" stroke-width="1.5"/><path d="M4 6.2l1.3 1.3L7.8 4.8M4 10.6l1.3 1.3L7.8 9.2M4 15l1.3 1.3L7.8 13.6" fill="none" stroke="#222" stroke-width="1.2"/><path d="M10 6.3H16M10 10.6H16M10 15H16" stroke="#222" stroke-width="1.4"/></svg><svg class="a" style="left:9px;top:1054px;" width="22" height="20" viewBox="0 0 22 20"><path d="M1.5 3H14.5V7.2A5.6 5.6 0 0 0 7.6 12.5L4.5 12.5L1.5 9Z" fill="#222"/><circle cx="13" cy="12" r="4.1" fill="none" stroke="#222" stroke-width="1.7"/><path d="M16 15L19.5 18.6" stroke="#222" stroke-width="2.2"/></svg>
<!-- 40_dialog -->
<div class="a" style="left:309px;top:79px;width:220px;height:455px;background:#ffffff;box-shadow:0 1px 6px rgba(0,0,0,.32),0 0 1px rgba(0,0,0,.25);"></div><span class="t" style="left:315.00px;top:86.80px;font-size:13px;color:#222;letter-spacing:-0.373px;font-weight:700;">Gearbox Spacer</span><div class="a" style="left:473px;top:79px;width:27.8px;height:28.3px;background:#0f940f;"></div><svg class="a" style="left:473px;top:79px;" width="28.5" height="28.5" viewBox="0 0 28.5 28.5"><path d="M7.6 14.8L12 19.2L21 9.4" fill="none" stroke="#fff" stroke-width="2.6" stroke-linecap="butt" stroke-linejoin="miter"/></svg><svg class="a" style="left:508px;top:87px;" width="14" height="14" viewBox="0 0 14 14"><path d="M2 2L12 12M12 2L2 12" stroke="#cc242c" stroke-width="2.9" fill="none"/></svg><div class="a" style="left:309px;top:107px;width:220px;height:1px;background:#d9d9d9;"></div><span class="t" style="left:350.00px;top:114.10px;font-size:13px;color:#1b5faa;letter-spacing:-0.268px;">Inch</span><span class="t" style="left:454.00px;top:114.10px;font-size:13px;color:#333;letter-spacing:-0.065px;">Metric</span><div class="a" style="left:309px;top:133px;width:220px;height:1px;background:#d2d2d2;"></div><div class="a" style="left:309px;top:132px;width:105px;height:2px;background:#1b5faa;"></div><div class="a" style="left:312.5px;top:141px;width:187.5px;height:43.5px;background:#d8ebf8;border:1px solid #2f72bd;border-radius:2px;"></div><span class="t" style="left:318.20px;top:147.96px;font-size:9.5px;color:#3a3a3a;letter-spacing:0.256px;">Sketch point to place spacer</span><span class="t" style="left:319.30px;top:166.70px;font-size:13px;color:#454545;letter-spacing:0.064px;">Mate connector</span><svg class="a" style="left:459.5px;top:167.5px;" width="13" height="13" viewBox="0 0 16 16"><circle cx="8" cy="8" r="6.6" fill="none" stroke="#8a8a8a" stroke-width="1.1"/><circle cx="8" cy="8" r="4.9" fill="none" stroke="#8a8a8a" stroke-width=".9"/><path d="M8 3.4V8H12.4" fill="none" stroke="#8a8a8a" stroke-width="1"/></svg><svg class="a" style="left:480px;top:169.5px;" width="8" height="8" viewBox="0 0 8 8"><path d="M.8 .8L7.2 7.2M7.2 .8L.8 7.2" stroke="#555" stroke-width="1.1"/></svg><svg class="a" style="left:503.5px;top:144px;" width="19" height="19" viewBox="0 0 16 16"><circle cx="8" cy="8" r="6.6" fill="none" stroke="#3c3c3c" stroke-width="1.1"/><circle cx="8" cy="8" r="4.9" fill="none" stroke="#3c3c3c" stroke-width=".9"/><path d="M8 3.4V8H12.4" fill="none" stroke="#3c3c3c" stroke-width="1"/></svg><svg class="a" style="left:313px;top:200.5px;" width="12" height="8" viewBox="0 0 12 8"><path d="M.8 1.3L6 6.5L11.2 1.3" fill="none" stroke="#444" stroke-width="2"/></svg><span class="t" style="left:333.20px;top:198.00px;font-size:13px;color:#454545;letter-spacing:-0.199px;">Spacer</span><div class="a" style="left:319.2px;top:217px;width:1px;height:125px;background:#d0d0d0;"></div><div class="a" style="left:314px;top:341.5px;width:10.5px;height:1px;background:#d0d0d0;"></div><span class="t" style="left:334.30px;top:226.64px;font-size:12px;color:#454545;letter-spacing:-0.185px;">Spacer type</span><span class="t" style="left:408.00px;top:223.60px;font-size:13px;color:#222;letter-spacing:0.038px;">Round</span><svg class="a" style="left:488.7px;top:228px;" width="8" height="4.5" viewBox="0 0 8 4.5"><path d="M0 0H8L4 4.5Z" fill="#222"/></svg><div class="a" style="left:402.5px;top:241.3px;width:100px;height:1px;background:#cfcfcf;"></div><span class="t" style="left:384.30px;top:251.43px;font-size:10px;color:#8a8a8a;letter-spacing:-0.114px;">Size</span><span class="t" style="left:415.00px;top:249.77px;font-size:13.5px;color:#222;letter-spacing:0.326px;">#10</span><svg class="a" style="left:515.5px;top:254.3px;" width="8" height="4.5" viewBox="0 0 8 4.5"><path d="M0 0H8L4 4.5Z" fill="#222"/></svg><div class="a" style="left:410px;top:265.8px;width:119px;height:1px;background:#cfcfcf;"></div><span class="t" style="left:348.80px;top:273.24px;font-size:10px;color:#8a8a8a;letter-spacing:0.414px;">Fastener fit</span><span class="t" style="left:415.00px;top:272.87px;font-size:13.5px;color:#222;letter-spacing:-0.064px;">Free</span><svg class="a" style="left:515.5px;top:277px;" width="8" height="4.5" viewBox="0 0 8 4.5"><path d="M0 0H8L4 4.5Z" fill="#222"/></svg><div class="a" style="left:410px;top:289.2px;width:119px;height:1px;background:#cfcfcf;"></div><div class="a" style="left:329.2px;top:295px;width:25.5px;height:20.2px;background:#d6d6d6;"></div><svg class="a" style="left:329.2px;top:290px;" width="25.5" height="25.2" viewBox="0 0 25.5 25.2"><path d="M5.3 5V17.8L12.4 24.2L20 17.8V5Z" fill="#fff"/><path d="M5.3 17.8L12.4 24.2L20 17.8" fill="none" stroke="#8a8a8a" stroke-width="1"/><path d="M5.3 5.2V17.8M20 5.2V17.8" stroke="#1b5faa" stroke-width="1.5"/><path d="M7.6 3.3H17.7M7.4 3.3l2.2 -1.7v3.4zM17.9 3.3l-2.2 -1.7v3.4z" stroke="#1b5faa" stroke-width="1" fill="#1b5faa"/></svg><span class="t" style="left:454.00px;top:299.00px;font-size:13px;color:#222;letter-spacing:-0.095px;">0.201 in</span><div class="a" style="left:355px;top:314.8px;width:147.5px;height:1px;background:#cfcfcf;"></div><svg class="a" style="left:335.5px;top:323px;" width="8" height="12" viewBox="0 0 8 12"><path d="M1.5 1L6 6L1.5 11" fill="none" stroke="#cfcfcf" stroke-width="1.9"/></svg><div class="a" style="left:353.3px;top:324.3px;width:11.5px;height:11.5px;background:#fff;border:1px solid #666;border-radius:2.5px;"></div><span class="t" style="left:369.20px;top:323.90px;font-size:13px;color:#454545;letter-spacing:0.200px;">Custom wall</span><svg class="a" style="left:313px;top:353.5px;" width="12" height="8" viewBox="0 0 12 8"><path d="M.8 1.3L6 6.5L11.2 1.3" fill="none" stroke="#444" stroke-width="2"/></svg><span class="t" style="left:333.20px;top:350.80px;font-size:13px;color:#454545;letter-spacing:0.028px;">Extrude</span><div class="a" style="left:319.2px;top:370px;width:1px;height:136px;background:#d0d0d0;"></div><div class="a" style="left:314px;top:505.5px;width:10.5px;height:1px;background:#d0d0d0;"></div><span class="t" style="left:335.00px;top:375.45px;font-size:14px;color:#222;letter-spacing:-0.027px;">Blind</span><svg class="a" style="left:488.7px;top:380.8px;" width="8" height="4.5" viewBox="0 0 8 4.5"><path d="M0 0H8L4 4.5Z" fill="#222"/></svg><div class="a" style="left:329px;top:395.3px;width:173.5px;height:1px;background:#cfcfcf;"></div><svg class="a" style="left:506px;top:372px;" width="22" height="20" viewBox="0 0 22 20"><path d="M20.5 2.5L8 13" stroke="#111" stroke-width="1.7"/><path d="M2.2 18.2L11.2 15.6L5.6 9.6Z" fill="#111"/><path d="M3 9.5L9 3.5M9 3.5h-3.4M9 3.5v3.4" stroke="#b9b9b9" stroke-width="1" fill="none"/></svg><span class="t" style="left:334.30px;top:407.64px;font-size:12px;color:#454545;letter-spacing:-0.204px;">Depth</span><span class="t" style="left:461.00px;top:406.80px;font-size:13px;color:#222;letter-spacing:-0.076px;">0.75 in</span><div class="a" style="left:370.5px;top:422.6px;width:132px;height:1px;background:#cfcfcf;"></div><svg class="a" style="left:335.5px;top:432.3px;" width="8" height="12" viewBox="0 0 8 12"><path d="M1.5 1L6 6L1.5 11" fill="none" stroke="#cfcfcf" stroke-width="1.9"/></svg><div class="a" style="left:353.3px;top:432.7px;width:11.5px;height:11.5px;background:#fff;border:1px solid #666;border-radius:2.5px;"></div><span class="t" style="left:369.20px;top:431.90px;font-size:13px;color:#454545;letter-spacing:0.268px;">Starting offset</span><div class="a" style="left:333.2px;top:460.6px;width:11.5px;height:11.5px;background:#fff;border:1px solid #666;border-radius:2.5px;"></div><span class="t" style="left:349.20px;top:460.10px;font-size:13px;color:#454545;letter-spacing:0.234px;">Symmetric</span><svg class="a" style="left:335.5px;top:487px;" width="8" height="12" viewBox="0 0 8 12"><path d="M1.5 1L6 6L1.5 11" fill="none" stroke="#cfcfcf" stroke-width="1.9"/></svg><div class="a" style="left:353.3px;top:487.4px;width:11.5px;height:11.5px;background:#fff;border:1px solid #666;border-radius:2.5px;"></div><span class="t" style="left:369.20px;top:486.80px;font-size:13px;color:#454545;letter-spacing:-0.069px;">Second end position</span><div class="a" style="left:316px;top:520.2px;width:112px;height:1.8px;background:#4a4a4a;"></div><div class="a" style="left:388px;top:515.7px;width:10.8px;height:10.8px;background:#fff;border:1px solid #8d8d8d;border-radius:50%;"></div><div class="a" style="left:454.3px;top:509.5px;width:48.5px;height:21px;background:#fff;border:1px solid #a8a8a8;border-radius:3px;"></div><span class="t" style="left:465.50px;top:513.82px;font-size:12.5px;color:#222;letter-spacing:-0.118px;">Final</span>
<!-- 50_topbar -->
<svg class="a" style="left:3.4px;top:8.3px;" width="22" height="23" viewBox="0 0 22 23"><path d="M11 2.6L18.7 7.05V15.95L11 20.4L3.3 15.95V7.05Z" fill="none" stroke="#55b848" stroke-width="4" stroke-linejoin="miter"/><path d="M11 11.5L1 5.4M11 11.5V24M11 11.5L21 17.3" stroke="#fafafa" stroke-width="1.2"/><path d="M11 7.5L14.6 9.5V13.6L11 15.6L7.4 13.6V9.5Z" fill="#fafafa" stroke="#5a5a5a" stroke-width="1.5" stroke-linejoin="miter"/><path d="M11 11.5L5 8M11 11.5V18.4" stroke="#fafafa" stroke-width="1.3"/></svg><span class="t" style="left:31.60px;top:9.26px;font-size:18px;color:#666;letter-spacing:-0.153px;">onshape</span><div class="a" style="left:113px;top:14.2px;width:16.2px;height:2.8px;background:#222;"></div><div class="a" style="left:113px;top:19.9px;width:16.2px;height:2.8px;background:#222;"></div><div class="a" style="left:113px;top:25.9px;width:16.2px;height:2.8px;background:#222;"></div><span class="t" style="left:141.00px;top:10.52px;font-size:21px;color:#262626;letter-spacing:0.126px;font-weight:700;">1B - Practice Exercise Solutions</span><span class="t" style="left:475.00px;top:15.46px;font-size:16px;color:#9b9b9b;letter-spacing:-0.354px;">FRCDesignLib Rework</span><svg class="a" style="left:644.5px;top:14.5px;" width="15" height="15" viewBox="0 0 15 15"><path d="M6.3 8.7L8.7 6.3M5.2 7L2.9 9.3A2 2 0 0 0 5.7 12.1L8 9.8M7 5.2L9.3 2.9A2 2 0 0 1 12.1 5.7L9.8 8" fill="none" stroke="#333" stroke-width="1.5" stroke-linecap="round"/></svg><svg class="a" style="left:669px;top:14.5px;" width="18" height="15" viewBox="0 0 18 15"><path d="M1 13.8V1.2H6.4L8 3.2H17V13.8Z" fill="none" stroke="#a5a5a5" stroke-width="1.1" stroke-linejoin="round"/></svg><span class="t" style="left:692.70px;top:14.16px;font-size:16px;color:#9b9b9b;letter-spacing:-0.451px;">Stage 1</span><svg class="a" style="left:796px;top:12.5px;" width="18" height="16" viewBox="0 0 18 16"><path d="M9 1L17.5 5.2L9 9.4L.5 5.2Z" fill="#1b5faa"/><path d="M4 8V12Q9 15.6 14 12V8L9 10.6Z" fill="#1b5faa"/><path d="M16.6 5.6V11.6" stroke="#1b5faa" stroke-width="1.2"/></svg><svg class="a" style="left:821.5px;top:11px;" width="19" height="19" viewBox="0 0 19 19"><circle cx="9.5" cy="9.5" r="8.3" fill="#fff" stroke="#333" stroke-width="1.5"/><path d="M4 4.6C6 3.6 7.4 4.8 7 6.4C6.6 8 4.4 8 4.6 10C4.8 11.6 6.8 11.6 7.2 13.4C7.4 15 6.6 16.4 6 17C3.2 15.8 1.6 12.6 1.6 9.6C1.6 7.6 2.6 5.6 4 4.6ZM11 1.6C12.4 2.6 12 4 13 4.6C14 5.2 15.4 4.6 15.8 5.4C17.2 7.6 17.4 9 17.2 11C16 10.6 15 9.6 13.6 9.8C12.2 10 12 11.4 12.8 12.4C13.6 13.4 13.4 14.6 12.6 16.4C14.6 15.4 16.4 13.6 17.2 11" fill="#333"/></svg><svg class="a" style="left:850px;top:11px;" width="19" height="18" viewBox="0 0 19 18"><path d="M5.6 4.2V1H11.4V2.6H14V4.2" fill="none" stroke="#333" stroke-width="1.3"/><path d="M1.2 4.2H8.6V16.6H1.2Z" fill="none" stroke="#333" stroke-width="1.5"/><path d="M8.6 6.6H14.2L17.6 10V16.6H8.6" fill="none" stroke="#333" stroke-width="1.5"/><path d="M14 6.8V10.2H17.4" fill="none" stroke="#333" stroke-width="1.1"/></svg><span class="t" style="left:876.00px;top:14.00px;font-size:15px;color:#333;letter-spacing:-1.175px;">215</span><svg class="a" style="left:917px;top:11px;" width="8" height="19" viewBox="0 0 8 19"><circle cx="4" cy="9.5" r="3" fill="#222"/><path d="M4 .8V5M4 14V18.4" stroke="#222" stroke-width="1.8" stroke-dasharray="1.5 1.2"/></svg><span class="t" style="left:936.70px;top:14.00px;font-size:15px;color:#333;letter-spacing:-0.592px;">5014</span><svg class="a" style="left:981.5px;top:10.5px;" width="19" height="19" viewBox="0 0 19 19"><path d="M1.4 8.6H5V17.2H1.4ZM5 9.4L9 1.4C10.8 1.4 11.4 2.8 11 4.4L10.2 7.4H16C17.2 7.4 17.8 8.4 17.6 9.4L16.2 15.6C16 16.6 15.2 17.2 14.2 17.2H5" fill="none" stroke="#222" stroke-width="1.5" stroke-linejoin="round"/></svg><span class="t" style="left:1007.80px;top:14.00px;font-size:15px;color:#333;">4</span><svg class="a" style="left:1514px;top:13px;" width="22" height="19" viewBox="0 0 22 19"><path d="M5.6 1.2C3.4 1.2 3.4 2.6 3.4 4.4V6.6C3.4 8.2 2.8 9 1.2 9.4C2.8 9.8 3.4 10.6 3.4 12.2V14.4C3.4 16.2 3.4 17.6 5.6 17.6M16.4 1.2C18.6 1.2 18.6 2.6 18.6 4.4V6.6C18.6 8.2 19.2 9 20.8 9.4C19.2 9.8 18.6 10.6 18.6 12.2V14.4C18.6 16.2 18.6 17.6 16.4 17.6" fill="none" stroke="#444" stroke-width="1.4"/><path d="M7 9.4L10 12.6L15.4 5.8" fill="none" stroke="#444" stroke-width="1.7"/></svg><svg class="a" style="left:1547.5px;top:14.5px;" width="18" height="18" viewBox="0 0 18 18"><path d="M9 1.2C12.4 1.2 14 3.8 14 7V10.6L16.4 14H1.6L4 10.6V7C4 3.8 5.6 1.2 9 1.2ZM6.8 15.2H11.2A2.2 2.2 0 0 1 6.8 15.2Z" fill="#8c8c8c"/></svg><div class="a" style="left:1557.3px;top:6px;width:16px;height:15.5px;background:#1b5faa;border-radius:3px;"></div><span class="t" style="left:1559.30px;top:8.84px;font-size:10px;color:#fff;letter-spacing:0.299px;font-weight:700;">9+</span><svg class="a" style="left:1580.5px;top:13px;" width="17" height="18" viewBox="0 0 17 18"><rect x="1" y="1" width="15" height="16" rx="1.3" fill="none" stroke="#333" stroke-width="1.4"/><path d="M3.2 5l1 1L6 4.2M3.2 9.2l1 1L6 8.4M3.2 13.4l1 1L6 12.6" fill="none" stroke="#333" stroke-width="1"/><path d="M7.6 5.2H13.4M7.6 9.4H13.4M7.6 13.6H13.4" stroke="#333" stroke-width="1.2"/></svg><svg class="a" style="left:1611.5px;top:12.5px;" width="19" height="19" viewBox="0 0 19 19"><rect x="1" y="1" width="6.6" height="6.6" fill="none" stroke="#333" stroke-width="1.5"/><rect x="1" y="11" width="6.6" height="6.6" fill="none" stroke="#333" stroke-width="1.5"/><rect x="11" y="11" width="6.6" height="6.6" fill="none" stroke="#333" stroke-width="1.5"/><path d="M14.3 .6V8M10.6 4.3H18" stroke="#333" stroke-width="1.6"/></svg><svg class="a" style="left:1643.5px;top:13px;" width="19" height="19" viewBox="0 0 19 19"><path d="M9 .8C13.8 .8 17 4 16.6 8.4L18 11.4L16.4 12V14.6C16.4 15.6 15.6 16 14.6 16H13.4V18.4H5.4V14C3.4 12.6 2 10.6 2 7.8C2 3.6 5 .8 9 .8Z" fill="#666"/><circle cx="8" cy="7.6" r="2.6" fill="none" stroke="#fff" stroke-width="1.2" stroke-dasharray="1.3 .9"/><circle cx="12.4" cy="5" r="1.5" fill="none" stroke="#fff" stroke-width=".9" stroke-dasharray=".9 .7"/></svg><div class="a" style="left:1673.3px;top:3.3px;width:58.4px;height:32.4px;background:#1a5db0;border-radius:4.5px;"></div><span class="t" style="left:1685.00px;top:12.73px;font-size:14.5px;color:#fff;letter-spacing:-0.860px;font-weight:700;">Share</span><svg class="a" style="left:1742.5px;top:13.5px;" width="18.5" height="18.5" viewBox="0 0 18.5 18.5"><circle cx="9.2" cy="9.2" r="9" fill="#3a3a3a"/><path d="M6.2 7.2C6.2 3.6 12.2 3.6 12.2 7C12.2 9 9.4 9.2 9.4 11.4" fill="none" stroke="#fff" stroke-width="2"/><circle cx="9.4" cy="14.4" r="1.3" fill="#fff"/></svg><svg class="a" style="left:1768.5px;top:20px;" width="9" height="5" viewBox="0 0 9 5"><path d="M0 0H9L4.5 5Z" fill="#333"/></svg><div class="a" style="left:1789px;top:10px;width:23.7px;height:24px;background:#0d1418;border-radius:2px;"></div><svg class="a" style="left:1789px;top:10px;" width="23.7" height="24" viewBox="0 0 23.7 24"><path d="M17.4 7L11.8 4L6.2 7V11L17.4 14.6V18L11.8 21L6.2 18M17.4 9.6L11.8 7L9 8.6M6.2 15.4L11.8 18L14.6 16.4" fill="none" stroke="#1fb9c9" stroke-width="1.6" stroke-linejoin="round"/></svg><span class="t" style="left:1818.80px;top:12.88px;font-size:15.5px;color:#333;letter-spacing:-0.951px;">Andrew Card</span><svg class="a" style="left:1906.4px;top:18.1px;" width="8" height="4" viewBox="0 0 8 4"><path d="M0 0H8L4 4Z" fill="#333"/></svg>
<!-- 60_toolbar -->
<svg class="a" style="left:46px;top:47.5px;" width="22" height="22" viewBox="0 0 22 22"><path d="M2 8.4L8.4 2.6V6.4C14 6.4 17 9.6 16.4 16.4C15.2 12.6 12.8 10.8 8.4 10.8V14.6Z" fill="#9c9c9c"/></svg><svg class="a" style="left:81.5px;top:47.5px;" width="22" height="22" viewBox="0 0 22 22"><path d="M20 8.4L13.6 2.6V6.4C8 6.4 5 9.6 5.6 16.4C6.8 12.6 9.2 10.8 13.6 10.8V14.6Z" fill="#9c9c9c"/></svg><div class="a" style="left:110.1px;top:46px;width:1.3px;height:24.5px;background:#cfcfcf;"></div><svg class="a" style="left:120.5px;top:49px;" width="19" height="19" viewBox="0 0 19 19"><path d="M4.2 12.4L13.4 1.8L16.4 4.4L7.2 15L3 16.4Z" fill="none" stroke="#2e2e2e" stroke-width="1.3" stroke-linejoin="round"/><path d="M4.2 12.4L7.2 15" stroke="#2e2e2e" stroke-width="1"/><path d="M.6 17.6H18.4" stroke="#2f6fbf" stroke-width="1.2"/></svg><span class="t" style="left:144.30px;top:51.30px;font-size:15px;color:#2e2e2e;letter-spacing:-0.560px;">Sketch</span><div class="a" style="left:199.4px;top:46px;width:1.3px;height:24.5px;background:#cfcfcf;"></div><svg class="a" style="left:208px;top:47.5px;" width="22" height="22" viewBox="0 0 22 22"><path d="M2 3.4L3.6 2H19V17.6L17.6 19.4H2Z" fill="#fff" stroke="#2e2e2e" stroke-width="1.1" stroke-linejoin="round"/><path d="M2 3.4H17.6V19.4M17.6 3.4L19 2" fill="none" stroke="#2e2e2e" stroke-width="1"/><rect x="7.4" y="8.6" width="10.2" height="10.6" fill="#8c8c8c" stroke="#555" stroke-width=".9"/></svg><svg class="a" style="left:242.3px;top:47.5px;" width="22" height="22" viewBox="0 0 22 22"><path d="M11 11L18.4 5.6A9 9 0 1 0 18.4 16.4Z" fill="#8c8c8c" stroke="#444" stroke-width="1"/><ellipse cx="16.6" cy="6.6" rx="2.6" ry="1.7" transform="rotate(-36 16.6 6.6)" fill="#fff" stroke="#555" stroke-width=".7"/><ellipse cx="16.6" cy="15.4" rx="2.6" ry="1.7" transform="rotate(36 16.6 15.4)" fill="#fff" stroke="#555" stroke-width=".7"/><path d="M9 11H21" stroke="#333" stroke-width=".9" stroke-dasharray="3 1.2 1 1.2"/></svg><svg class="a" style="left:276.3px;top:47.5px;" width="22" height="22" viewBox="0 0 22 22"><path d="M2.4 18.6C1.6 12 4 9.4 9 9C13.4 8.6 14.2 7 14.2 3.6L20 3.2C20.6 9.6 17.6 12.6 12.6 13.2C9 13.6 8.2 15.4 8.2 18.6Q5.2 20.4 2.4 18.6Z" fill="#8c8c8c" stroke="#555" stroke-width="1"/><ellipse cx="17.1" cy="3.4" rx="2.9" ry="1.7" fill="#fff" stroke="#555" stroke-width=".8"/></svg><div class="a" style="left:305.1px;top:46px;width:1.3px;height:24.5px;background:#cfcfcf;"></div><svg class="a" style="left:314px;top:47.5px;" width="22" height="22" viewBox="0 0 22 22"><path d="M2 8.6C2 4.6 5 2 9 2H18.4L20 3.6V19.6H3.6L2 18Z" fill="#fff" stroke="#2e2e2e" stroke-width="1.1" stroke-linejoin="round"/><path d="M2 8.6C3 5 6 3 9 2L10.6 3.4C7 4.2 4.6 6.4 3.6 10Z" fill="#8c8c8c" stroke="#444" stroke-width=".8"/><path d="M3.6 10V19.6M10.6 3.4H20" fill="none" stroke="#2e2e2e" stroke-width=".9"/></svg><svg class="a" style="left:344.5px;top:55.5px;" width="10" height="6.5" viewBox="0 0 10 6.5"><path d="M.8 .8L5 5L9.2 .8" fill="none" stroke="#333" stroke-width="1.5"/></svg><svg class="a" style="left:365.7px;top:47.5px;" width="22" height="22" viewBox="0 0 22 22"><path d="M2 9L8.6 2H18.4L20 3.6V19.6H3.6L2 18Z" fill="#fff" stroke="#2e2e2e" stroke-width="1.1" stroke-linejoin="round"/><path d="M2 9L8.6 2L10.4 3.4L3.6 10.6Z" fill="#8c8c8c" stroke="#444" stroke-width=".8"/><path d="M3.6 10.6V19.6M10.4 3.4H20" fill="none" stroke="#2e2e2e" stroke-width=".9"/></svg><svg class="a" style="left:399.7px;top:47.5px;" width="22" height="22" viewBox="0 0 22 22"><path d="M2 2H18.6L20 3.4V19.8H3.6L2 18.4Z" fill="#fff" stroke="#2e2e2e" stroke-width="1.1" stroke-linejoin="round"/><path d="M3.6 3.4H20M3.6 3.4V19.8M2 2L3.6 3.4" fill="none" stroke="#2e2e2e" stroke-width=".9"/><path d="M6.4 3.4V17H17.2V3.4H14.6V14.4H9V3.4Z" fill="#8c8c8c" stroke="#555" stroke-width=".8"/></svg><svg class="a" style="left:434px;top:47.5px;" width="22" height="22" viewBox="0 0 22 22"><path d="M2 2H18.6L20 3.4V19.8H3.6L2 18.4Z" fill="#fff" stroke="#2e2e2e" stroke-width="1.1" stroke-linejoin="round"/><path d="M3.6 3.4H20M3.6 3.4V19.8M2 2L3.6 3.4" fill="none" stroke="#2e2e2e" stroke-width=".9"/><circle cx="11.8" cy="11.8" r="5.2" fill="#8c8c8c" stroke="#444" stroke-width="1"/><circle cx="10.6" cy="10.6" r="2.2" fill="#c9c9c9"/></svg><svg class="a" style="left:468px;top:47.5px;" width="22" height="22" viewBox="0 0 22 22"><path d="M5.4 4.4V17.6C5.4 20.4 16.6 20.4 16.6 17.6V4.4" fill="#f4f4f4" stroke="#2e2e2e" stroke-width="1"/><ellipse cx="11" cy="4.4" rx="5.6" ry="2.3" fill="#fff" stroke="#2e2e2e" stroke-width="1"/><path d="M5.4 8.2Q11 10.6 16.6 8.2M5.4 10.6Q11 13 16.6 10.6M5.4 13Q11 15.4 16.6 13M5.4 15.4Q11 17.8 16.6 15.4" fill="none" stroke="#777" stroke-width="1.1"/></svg><svg class="a" style="left:502.5px;top:47.5px;" width="22" height="22" viewBox="0 0 22 22"><path d="M1.6 6.6L6 3.6C9 5 12 2.6 14.6 2.4L20.4 5V15.6L14.8 19.6L1.6 15.2Z" fill="#8c8c8c" stroke="#2e2e2e" stroke-width="1" stroke-linejoin="round"/><path d="M1.6 6.6L7.6 9.4C10 10.4 12.4 8.4 14.8 8.2L20.4 5M7.6 9.4V17.2" fill="none" stroke="#2e2e2e" stroke-width=".9"/><path d="M7.6 9.4C10 10.4 12.4 8.4 14.8 8.2V19.6L7.6 17.2Z" fill="#f2f2f2" stroke="#2e2e2e" stroke-width=".8"/><path d="M11.2 5.4V12M8.6 9.8L11.2 12.6L13.8 9.8" fill="none" stroke="#111" stroke-width="1.7"/></svg><svg class="a" style="left:532.8px;top:55.5px;" width="10" height="6.5" viewBox="0 0 10 6.5"><path d="M.8 .8L5 5L9.2 .8" fill="none" stroke="#333" stroke-width="1.5"/></svg><div class="a" style="left:549.4px;top:46px;width:1.3px;height:24.5px;background:#cfcfcf;"></div><svg class="a" style="left:557.8px;top:47.5px;" width="22" height="22" viewBox="0 0 22 22"><rect x="2" y="2" width="17.6" height="17.6" rx="1.6" fill="#8c8c8c" stroke="#2e2e2e" stroke-width="1.1"/><rect x="3.2" y="3.2" width="7" height="7" fill="#fff" stroke="#555" stroke-width=".7"/><path d="M10.8 2V19.6M2 10.8H19.6" stroke="#2e2e2e" stroke-width="1.2"/></svg><svg class="a" style="left:589px;top:55.5px;" width="10" height="6.5" viewBox="0 0 10 6.5"><path d="M.8 .8L5 5L9.2 .8" fill="none" stroke="#333" stroke-width="1.5"/></svg><svg class="a" style="left:610px;top:47.5px;" width="22" height="22" viewBox="0 0 22 22"><path d="M2.6 2.4H6.4L9.4 5V18L6.4 20H2.6Z" fill="#fff" stroke="#2e2e2e" stroke-width="1.1" stroke-linejoin="round"/><path d="M6.4 2.4V20" stroke="#2e2e2e" stroke-width=".8"/><path d="M8 3.4L11.6 6.4V14.6L9.4 16" fill="none" stroke="#b5b5b5" stroke-width="1"/><path d="M12.6 20V8.4L15.4 2.4H19.4V20Z" fill="#8c8c8c" stroke="#2e2e2e" stroke-width="1" stroke-linejoin="round"/><path d="M15.4 2.4V8.4L12.6 11" fill="none" stroke="#2e2e2e" stroke-width=".8"/></svg><div class="a" style="left:639.4px;top:46px;width:1.3px;height:24.5px;background:#cfcfcf;"></div><svg class="a" style="left:647.5px;top:47.5px;" width="22" height="22" viewBox="0 0 22 22"><circle cx="7.6" cy="11" r="5.8" fill="#fff" stroke="#2e2e2e" stroke-width="1.1"/><circle cx="14.4" cy="11" r="5.8" fill="#8c8c8c" stroke="#2e2e2e" stroke-width="1.1"/><circle cx="7.6" cy="11" r="5.8" fill="none" stroke="#2e2e2e" stroke-width="1.1"/></svg><svg class="a" style="left:682.5px;top:47.5px;" width="22" height="22" viewBox="0 0 22 22"><path d="M2 10.4L3.6 9H10.6V17.8L9.2 19.4H2Z" fill="#fff" stroke="#2e2e2e" stroke-width="1" stroke-linejoin="round"/><path d="M2 10.4H9.2V19.4M9.2 10.4L10.6 9" fill="none" stroke="#2e2e2e" stroke-width=".8"/><path d="M14 1.6L19.4 6.4L15 12L9.6 7Z" fill="#8c8c8c" stroke="#444" stroke-width=".9"/><path d="M3.6 7.4C4 4.6 5.6 3.2 8 2.8M6 1.4L8.4 2.8L6.6 4.8" fill="none" stroke="#2e2e2e" stroke-width="1.2"/><path d="M18.6 13C18.4 15.8 17 17.4 14.4 18M16.4 19.6L14 18.2L15.6 16" fill="none" stroke="#2e2e2e" stroke-width="1.2"/></svg><svg class="a" style="left:712.8px;top:55.5px;" width="10" height="6.5" viewBox="0 0 10 6.5"><path d="M.8 .8L5 5L9.2 .8" fill="none" stroke="#333" stroke-width="1.5"/></svg><div class="a" style="left:729.4px;top:46px;width:1.3px;height:24.5px;background:#cfcfcf;"></div><svg class="a" style="left:738.5px;top:47.5px;" width="22" height="22" viewBox="0 0 22 22"><path d="M2.4 2L19.4 4V19.6L2.4 17.4Z" fill="#d9d9d9" stroke="#2e2e2e" stroke-width="1.1" stroke-linejoin="round"/><path d="M10.6 3V11L19.4 12" fill="#fff" stroke="#2e2e2e" stroke-width="1"/></svg><svg class="a" style="left:771.7px;top:47.5px;" width="22" height="22" viewBox="0 0 22 22"><circle cx="11" cy="11" r="8.8" fill="#fff" stroke="#2e2e2e" stroke-width="1.2"/><circle cx="11" cy="11" r="6.6" fill="none" stroke="#2e2e2e" stroke-width="1"/><path d="M11 4.6V11H17.4" fill="none" stroke="#2e2e2e" stroke-width="1.1"/></svg><svg class="a" style="left:806px;top:47.5px;" width="22" height="22" viewBox="0 0 22 22"><path d="M2.4 12.6L5.4 10H9.4V6.4H19V19.6H5L2.4 17Z" fill="#fff" stroke="#2e2e2e" stroke-width="1.1" stroke-linejoin="round"/><path d="M2.4 12.6H9.4V15.2M9.4 15.2L5 19.6M9.4 6.4V15.2H19" fill="none" stroke="#2e2e2e" stroke-width=".8"/><path d="M3 2.6H8C10.4 2.6 11.4 4 11.4 6.4V9.8M8.4 7.6L11.4 10.6L14.4 7.6" fill="none" stroke="#111" stroke-width="1.6"/></svg><svg class="a" style="left:840px;top:47.5px;" width="22" height="22" viewBox="0 0 22 22"><path d="M4.6 2.6Q.4 11 4.6 19.4M17.4 2.6Q21.6 11 17.4 19.4" fill="none" stroke="#2e2e2e" stroke-width="1.6"/><text x="11" y="16.4" font-size="16.5" font-style="italic" font-weight="700" text-anchor="middle" font-family="Liberation Serif,serif" fill="#2e2e2e">x</text></svg><svg class="a" style="left:874px;top:47.5px;" width="22" height="22" viewBox="0 0 22 22"><path d="M4.6 2.6Q.4 11 4.6 19.4M17.4 2.6Q21.6 11 17.4 19.4" fill="none" stroke="#2e2e2e" stroke-width="1.6"/><circle cx="10" cy="10" r="3.4" fill="none" stroke="#2e2e2e" stroke-width="1.4"/><path d="M12.4 12.6L15.6 16" stroke="#2e2e2e" stroke-width="1.6"/></svg><svg class="a" style="left:907.5px;top:47.5px;" width="22" height="22" viewBox="0 0 22 22"><path d="M6.6 4.4l4.4 -2.42l4.4 2.42v4.62l-4.4 2.42l-4.4 -2.42z" fill="#fff" stroke="#555" stroke-width=".9" stroke-linejoin="round"/><path d="M6.6 4.4l4.4 2.42l4.4 -2.42M11 6.82v4.62" fill="none" stroke="#555" stroke-width=".8"/><path d="M2 12l4.4 -2.42l4.4 2.42v4.62l-4.4 2.42l-4.4 -2.42z" fill="#fff" stroke="#555" stroke-width=".9" stroke-linejoin="round"/><path d="M2 12l4.4 2.42l4.4 -2.42M6.4 14.42v4.62" fill="none" stroke="#555" stroke-width=".8"/><path d="M11.2 12l4.4 -2.42l4.4 2.42v4.62l-4.4 2.42l-4.4 -2.42z" fill="#fff" stroke="#555" stroke-width=".9" stroke-linejoin="round"/><path d="M11.2 12l4.4 2.42l4.4 -2.42M15.6 14.42v4.62" fill="none" stroke="#555" stroke-width=".8"/></svg><div class="a" style="left:937.1px;top:46px;width:1.3px;height:24.5px;background:#cfcfcf;"></div><svg class="a" style="left:945.7px;top:47.5px;" width="22" height="22" viewBox="0 0 22 22"><path d="M11 1.8L19.4 6V15.6L11 20.2L2.6 15.6V6Z" fill="#fff" stroke="#2e2e2e" stroke-width="1.2" stroke-linejoin="round"/><path d="M11 10.4V20.2L19.4 15.6V6Z" fill="#d2d2d2" stroke="#2e2e2e" stroke-width="1"/><path d="M2.6 6L11 10.4" stroke="#2e2e2e" stroke-width="1"/></svg><svg class="a" style="left:980.7px;top:47.5px;" width="22" height="22" viewBox="0 0 22 22"><path d="M7 1V5.6M11 .4V5.6M15 1V5.6" stroke="#4b7bd0" stroke-width="1.3"/><path d="M9.6 2l1.4 -1.6l1.4 1.6" fill="none" stroke="#222" stroke-width="1"/><path d="M2 7.6L19.6 5.8L20.4 16.6L3 18.8Z" fill="#2e2e2e"/><path d="M.6 10l1.6 -.2v4.4l-1.6 .2zM20.2 9l1.4 -.2v4.2l-1.4 .2z" fill="#2e2e2e"/><circle cx="7.6" cy="12" r="2.9" fill="#fff"/><circle cx="14.6" cy="11.2" r="2.9" fill="#fff"/><path d="M6.4 10.6l2.6 1.4l-2.6 1.4z" fill="#2f6fbf"/><path d="M13.2 10.2h3l-1.5 2.4z" fill="#2f6fbf"/><path d="M9.6 16.4Q12.6 16.6 13.6 14.6" fill="none" stroke="#fff" stroke-width=".9"/></svg><svg class="a" style="left:1014px;top:47.5px;" width="22" height="22" viewBox="0 0 22 22"><rect x="1" y="1" width="20" height="20" fill="#fafafa"/><circle cx="7" cy="6.6" r="3.6" fill="none" stroke="#c6c6c6" stroke-width="1.2"/><circle cx="15.6" cy="16" r="2.6" fill="none" stroke="#a9a9a9" stroke-width="1.2"/><path d="M4 9L13.4 18.4M10 4.6L18.2 14.6" stroke="#c6c6c6" stroke-width="1.1"/></svg><svg class="a" style="left:1048.3px;top:47.5px;" width="22" height="22" viewBox="0 0 22 22"><path d="M7 1V5.6M11 .4V5.6M15 1V5.6" stroke="#4b7bd0" stroke-width="1.3"/><path d="M9.6 2l1.4 -1.6l1.4 1.6" fill="none" stroke="#222" stroke-width="1"/><path d="M2 7.6L19.6 5.8L20.4 16.6L3 18.8Z" fill="#2e2e2e"/><path d="M.6 10l1.6 -.2v4.4l-1.6 .2zM20.2 9l1.4 -.2v4.2l-1.4 .2z" fill="#2e2e2e"/><circle cx="7.6" cy="12" r="2.9" fill="#fff"/><circle cx="14.6" cy="11.2" r="2.9" fill="#fff"/><path d="M6.4 10.6l2.6 1.4l-2.6 1.4z" fill="#2f6fbf"/><path d="M13.2 10.2h3l-1.5 2.4z" fill="#2f6fbf"/><path d="M9.6 16.4Q12.6 16.6 13.6 14.6" fill="none" stroke="#fff" stroke-width=".9"/></svg><svg class="a" style="left:1082.3px;top:47.5px;" width="22" height="22" viewBox="0 0 22 22"><path d="M2 3.6L4.4 2H20V17.6L17.6 19.6H2Z" fill="#bdbdbd" stroke="#666" stroke-width="1"/><rect x="3" y="4.4" width="14" height="14.4" fill="#8d8d8d"/><rect x="3" y="4.4" width="7" height="7.2" fill="#a4a4a4"/><rect x="10" y="11.6" width="7" height="7.2" fill="#777"/><path d="M2 3.6H17.6V19.6M17.6 3.6L20 2" fill="none" stroke="#666" stroke-width=".9"/></svg><svg class="a" style="left:1115.7px;top:47.5px;" width="22" height="22" viewBox="0 0 22 22"><circle cx="11" cy="10.4" r="5.4" fill="none" stroke="#444" stroke-width="3.4"/><path d="M2.6 1.4L7.4 6M19.4 1.4L14.6 6" stroke="#444" stroke-width="3"/><path d="M6 15.4L3.4 18H18.6L16 15.4M1.6 19.4H20.4" stroke="#444" stroke-width="2.6" fill="none"/><path d="M17 2.6l2.4 -1.6l.4 3z" fill="#444"/></svg><svg class="a" style="left:1150px;top:47.5px;" width="22" height="22" viewBox="0 0 22 22"><path d="M9.2 1H12.8L13.4 3.8L15.4 4.8L18 3.4L20.2 6.4L18.4 8.6L18.8 10.8L21.2 12L20.4 15.4L17.6 15.6L16.2 17.4L16.8 20.2L13.6 21.4L12 19H10L8.4 21.4L5.2 20.2L5.8 17.4L4.4 15.6L1.6 15.4L.8 12L3.2 10.8L3.6 8.6L1.8 6.4L4 3.4L6.6 4.8L8.6 3.8Z" fill="#7c7c7c" stroke="#2a2a2a" stroke-width="1"/><circle cx="11" cy="11" r="3.4" fill="#fff" stroke="#2a2a2a" stroke-width="1"/></svg><svg class="a" style="left:1184px;top:47.5px;" width="22" height="22" viewBox="0 0 22 22"><path d="M4 1.6H18L12.2 10.4V14.4H9.8V10.4Z" fill="#9a9a9a" stroke="#666" stroke-width=".8"/><path d="M5.6 15H16.4M4 17.6H18M5.6 20.2H16.4" stroke="#8a8a8a" stroke-width="1.7"/></svg><div class="a" style="left:1213.4px;top:46px;width:1.3px;height:24.5px;background:#cfcfcf;"></div><svg class="a" style="left:1221px;top:47.5px;" width="22" height="22" viewBox="0 0 22 22"><path d="M2 11.4L11.4 4L19.4 12L11 20.6Z" fill="#fff" stroke="#2e2e2e" stroke-width="1.2" stroke-linejoin="round"/><path d="M3.4 12.6H18.8L11 20.6Z" fill="#2e2e2e"/><path d="M6.4 1L14.6 9.6" stroke="#2e2e2e" stroke-width="1.2"/><path d="M19.6 13.4C21.4 16 21.6 18.6 20 19.4C18.4 18.6 18.4 16 19.6 13.4Z" fill="#2e2e2e"/></svg><svg class="a" style="left:1256.2px;top:48px;" width="21" height="21" viewBox="0 0 21 21"><rect x=".8" y=".8" width="19.4" height="19.4" rx="2.6" fill="#fff" stroke="#9a9a9a" stroke-width="1"/><text x="10.5" y="14.6" font-size="10.5" text-anchor="middle" fill="#2e2e2e">SM</text></svg><svg class="a" style="left:1289.7px;top:47.5px;" width="22" height="22" viewBox="0 0 22 22"><path d="M2 6.4Q11 3 19.6 4.6L20.4 15.4Q11 14.6 2.8 17.6Z" fill="#fff" stroke="#2e2e2e" stroke-width="1.5" stroke-linejoin="round"/><path d="M2.2 7Q11 3.6 19.8 5.2L20 9Q11 7.6 2.6 10.6Z" fill="#2e2e2e"/><text x="11" y="8.6" font-size="3.6" font-weight="700" text-anchor="middle" fill="#fff" transform="rotate(-6 11 8)">HELLO</text></svg><svg class="a" style="left:1324.5px;top:48px;" width="21" height="21" viewBox="0 0 21 21"><rect x=".8" y=".8" width="19.4" height="19.4" rx="2.6" fill="#fff" stroke="#9a9a9a" stroke-width="1"/><text x="10.5" y="14.6" font-size="11.5" text-anchor="middle" fill="#2e2e2e">Ai</text></svg><svg class="a" style="left:1358.5px;top:48px;" width="21" height="21" viewBox="0 0 21 21"><rect x=".8" y=".8" width="19.4" height="19.4" rx="2.6" fill="#fff" stroke="#9a9a9a" stroke-width="1"/><text x="10.5" y="14.6" font-size="11.5" text-anchor="middle" fill="#2e2e2e">Ds</text></svg><div class="a" style="left:1387.7px;top:46px;width:1.3px;height:24.5px;background:#cfcfcf;"></div><svg class="a" style="left:1395.5px;top:47.5px;" width="22" height="22" viewBox="0 0 22 22"><path d="M2 4.6L4.6 2.6H9V12.6L12 15V5.4L14.6 3.4C18 5 19.6 8.4 19.6 12V17.6L17 19.8H10C5.6 19.8 2 16 2 12Z" fill="#fff" stroke="#2e2e2e" stroke-width="1.1" stroke-linejoin="round"/><path d="M9 12.6L12 15H17.6V17.8L12 17.6L6.6 13.4V4.4" fill="#cfcfcf" stroke="#777" stroke-width=".7"/><path d="M4.6 2.6V12C4.6 15.6 8 17.6 10 17.6" fill="none" stroke="#2e2e2e" stroke-width=".9"/></svg><svg class="a" style="left:1429.7px;top:47.5px;" width="22" height="22" viewBox="0 0 22 22"><path d="M13.6 2.4L19 3.6V17.4L8.4 19.6L2.4 15L13.6 13Z" fill="#d6d6d6" stroke="#2e2e2e" stroke-width="1.1" stroke-linejoin="round"/><path d="M13.6 13L19 17.4M13.6 2.4V13" fill="none" stroke="#2e2e2e" stroke-width=".9"/><path d="M13.6 2.4L19 3.6V17.4L13.6 13Z" fill="#a8a8a8" stroke="#2e2e2e" stroke-width=".9"/></svg><svg class="a" style="left:1464px;top:47.5px;" width="22" height="22" viewBox="0 0 22 22"><path d="M1.6 11.4L9.6 9.4L13.8 14L5.6 16.2Z" fill="#fff" stroke="#2e2e2e" stroke-width="1.1" stroke-linejoin="round"/><path d="M9.6 9.4L16.2 4.6L20.4 9.4L13.8 14Z" fill="#bdbdbd" stroke="#2e2e2e" stroke-width="1.1" stroke-linejoin="round"/><path d="M5.4 5.4L18.6 18.6" stroke="#2e2e2e" stroke-width="1"/></svg><svg class="a" style="left:1498.3px;top:47.5px;" width="22" height="22" viewBox="0 0 22 22"><path d="M8 2.2H19.4V19.6H3.4V12.6H7C9 12.6 9 9.6 7 9.4C4.6 9 4.6 2.2 8 2.2Z" fill="#d9d9d9" stroke="#2e2e2e" stroke-width="1.1" stroke-linejoin="round"/><path d="M3.4 12.6H9V9C9 7.4 6 7 6 5C6 3.6 7 2.2 8 2.2H13V14.4H3.4Z" fill="#8d8d8d" stroke="#2e2e2e" stroke-width=".8"/><path d="M13 14.4V2.2" stroke="#2e2e2e" stroke-width=".8"/><path d="M13 14.4H9V19.4" stroke="#2e2e2e" stroke-width=".8" fill="none"/></svg><svg class="a" style="left:1532.3px;top:47.5px;" width="22" height="22" viewBox="0 0 22 22"><path d="M2 19.6V8.6L8.6 2H20" fill="none" stroke="#2e2e2e" stroke-width="1.1"/><path d="M2 8.6L8.6 2H2Z" fill="#9a9a9a"/><path d="M2.6 19.6V9.4Q3.4 3.6 10 2.6H20V19.6Z" fill="#f0f0f0"/></svg><svg class="a" style="left:1565.7px;top:47.5px;" width="22" height="22" viewBox="0 0 22 22"><path d="M2 6L4.4 3.6H10V6.4H17.6V16C17.6 18 16 19.6 14 19.6H6C3.6 19.6 2 18 2 16Z" fill="#fff" stroke="#2e2e2e" stroke-width="1.1" stroke-linejoin="round"/><path d="M4.4 3.6V16.4Q5 19 7 19.4M9.6 6.4V13.6L16.4 19" fill="none" stroke="#2e2e2e" stroke-width=".9"/><path d="M9.6 13.6L17.4 18.4V12.6Z" fill="#a9a9a9"/><path d="M10.6 5.4L13.4 8.4L19.4 1.8" fill="none" stroke="#111" stroke-width="2.2"/></svg><svg class="a" style="left:1600px;top:47.5px;" width="22" height="22" viewBox="0 0 22 22"><path d="M2 2.4H18.6V19.4M18.6 8.6H9.4C5.6 8.6 5.6 14.4 9.4 14.4H16V19.4M16 14.4H18.6" fill="none" stroke="#2e2e2e" stroke-width="1.2"/></svg><div class="a" style="left:1629.4px;top:46px;width:1.3px;height:24.5px;background:#cfcfcf;"></div><svg class="a" style="left:1638.3px;top:47.5px;" width="22" height="22" viewBox="0 0 22 22"><rect x="1.4" y="1.4" width="19.2" height="19.2" rx="3.4" fill="none" stroke="#2e2e2e" stroke-width="1.3" stroke-dasharray="4 2.6"/><path d="M11 6.8V15.2M6.8 11H15.2" stroke="#111" stroke-width="1.7"/></svg><div class="a" style="left:1676.7px;top:42.3px;width:160.6px;height:31.7px;background:#f0f0f0;border-radius:5px;"></div><span class="t" style="left:1686.70px;top:50.60px;font-size:15px;color:#2e2e2e;letter-spacing:-0.659px;">Search tools...</span><div class="a" style="left:1776.7px;top:49.7px;width:33.5px;height:18.6px;background:#f7f7f7;border:1px solid #a9a9a9;border-radius:3px;"></div><span class="t" style="left:1780.00px;top:54.11px;font-size:10.5px;color:#333;letter-spacing:0.623px;">alt/</span><svg class="a" style="left:1797.5px;top:55.5px;" width="10" height="8" viewBox="0 0 10 8"><path d="M.5 1.4H3.4L6.6 6.6H9.5M6 1.4H9.5" fill="none" stroke="#333" stroke-width="1"/></svg><div class="a" style="left:1811.7px;top:49.7px;width:16px;height:18.6px;background:#f7f7f7;border:1px solid #a9a9a9;border-radius:3px;"></div><span class="t" style="left:1817.00px;top:54.11px;font-size:10.5px;color:#333;">c</span>
<!-- 70_misc -->
<div class="a" style="left:40px;top:1049.5px;width:1880px;height:30.5px;background:#d8d8d8;"></div><div class="a" style="left:40px;top:1049.5px;width:34px;height:30.5px;background:#d2d2d2;"></div><svg class="a" style="left:49px;top:1057px;" width="15" height="15" viewBox="0 0 15 15"><path d="M7.5 0V15M0 7.5H15" stroke="#555" stroke-width="2.6"/></svg><svg class="a" style="left:74px;top:1050.3px;" width="370" height="27" viewBox="0 0 370 27"><path d="M.5 0H35L41.5 13.5L35 27H.5Z" fill="#e6e6e6"/><path d="M35 0H152L158.6 13.5L152 27H35L41.5 13.5Z" fill="#fdfdfd"/><path d="M161 0H361V27H161Z" fill="#e9e9e9"/><path d="M9 12.4L18 3.8L27 12.4V20.6H20.4V14.6H15.6V20.6H9Z" fill="#666"/><path d="M21.6 4.4H25.2V8.6L21.6 5.4Z" fill="#666"/><path d="M52.5 18.3V5.3H58.6L60.4 7.4H69.6V18.3Z" fill="#fff" stroke="#333" stroke-width="1.2" stroke-linejoin="round"/><path d="M172.6 5.6L175.4 4H187.6L189.4 6.4V19.4L187 21.4H174.6L172.6 19Z" fill="#fff" stroke="#333" stroke-width="1.1" stroke-linejoin="round"/><path d="M172.6 5.6L176 8.4V21M176 8.4H189" fill="none" stroke="#333" stroke-width=".8"/><path d="M174.2 5L177 7.4H184.6V15.6H177V7.4" fill="#8d8d8d" stroke="#555" stroke-width=".8"/></svg><span class="t" style="left:150.40px;top:1055.73px;font-size:14.5px;color:#6a6a6a;letter-spacing:-0.569px;">Exercise 1</span><span class="t" style="left:268.00px;top:1056.13px;font-size:14.5px;color:#6a6a6a;letter-spacing:-0.356px;">Exercise 1 Assembly</span><div class="a" style="left:437.3px;top:1049px;width:199.5px;height:28.6px;background:#ffffff;border-bottom:2.3px solid #1b5faa;border-radius:0 0 5px 5px;"></div><svg class="a" style="left:448.5px;top:1053.5px;" width="18" height="19" viewBox="0 0 18 19"><path d="M1.4 5.6L3.8 4.2H7.2V2.4L9.4 1H14L16.4 3V16.4L14.4 18H9.6V17.6L7.6 18.4H3.4L1.4 16.4Z" fill="#fff" stroke="#333" stroke-width="1.1" stroke-linejoin="round"/><path d="M1.4 5.6L3.6 7.2V18.2M3.6 7.2H7.4M7.2 4.2V17.8M9.6 3.4V17.6M9.6 3.4L7.4 2.4M9.6 3.4H14.6" fill="none" stroke="#333" stroke-width=".8"/></svg><span class="t" style="left:470.80px;top:1056.13px;font-size:14.5px;color:#262626;letter-spacing:-0.453px;">Exercise 1 Part Studio</span><svg class="a" style="left:1890.5px;top:1029px;" width="19" height="14" viewBox="0 0 19 14"><path d="M1.6 12.6C1.6 6 5 2 9.5 2S17.4 6 17.4 12.6" fill="none" stroke="#555" stroke-width="1.3"/><path d="M4.6 12.6C4.6 8 6.6 5.4 9.5 5.4S14.4 8 14.4 12.6" fill="none" stroke="#555" stroke-width="1.2"/><rect x="1" y="11.6" width="17" height="2" fill="#555"/><circle cx="9.5" cy="10" r="1.8" fill="#555"/></svg><div class="a" style="left:1888.5px;top:433px;width:32px;height:132.5px;background:#fff;border:1px solid #c2c2c2;border-right:none;"></div><div class="a" style="left:1888.5px;top:466.5px;width:32px;height:1px;background:#c8c8c8;"></div><div class="a" style="left:1888.5px;top:499px;width:32px;height:1px;background:#c8c8c8;"></div><div class="a" style="left:1888.5px;top:532px;width:32px;height:1px;background:#c8c8c8;"></div><div class="a" style="left:1888.5px;top:576px;width:32px;height:99.5px;background:#fff;border:1px solid #c2c2c2;border-right:none;"></div><div class="a" style="left:1888.5px;top:609px;width:32px;height:1px;background:#c8c8c8;"></div><div class="a" style="left:1888.5px;top:642px;width:32px;height:1px;background:#c8c8c8;"></div><svg class="a" style="left:1893.5px;top:439px;" width="22" height="22" viewBox="0 0 22 22"><path d="M2.6 14.6L8 2.6L14 4.6L10.6 14.6Z" fill="#8c8c8c"/><path d="M8 2.6L14 4.6L19 9.4L16.4 14.6L12 13" fill="#b5b5b5"/><rect x="1.6" y="13.6" width="18.4" height="5.6" rx="1" fill="#fff" stroke="#777" stroke-width="1"/><rect x="8.4" y="14.2" width="11" height="4.4" fill="#c9c9c9"/><circle cx="4.6" cy="16.4" r="1.1" fill="#777"/></svg><svg class="a" style="left:1893.5px;top:472px;" width="22" height="22" viewBox="0 0 22 22"><path d="M6.4 9.4l7 -3.4l7 3.4v8.2l-7 3.6l-7 -3.6z" fill="#fff" stroke="#222" stroke-width="1.1" stroke-linejoin="round"/><path d="M6.4 9.4l7 3.4l7 -3.4M13.4 12.8v8.4" fill="none" stroke="#222" stroke-width="1"/><path d="M1 2h8.6M1 4.9h8.6M1 7.7h8.6M1 10.4h8.6M1 2v8.4M3.9 2v8.4M6.7 2v8.4M9.6 2v8.4" stroke="#1b5faa" stroke-width="1.3" fill="none"/></svg><svg class="a" style="left:1893.5px;top:505px;" width="22" height="22" viewBox="0 0 22 22"><path d="M6.6 6.4C4.6 6.4 5.6 11 3.6 12.4C5.6 13.8 4.6 18.6 6.6 18.6M17.4 6.4C19.4 6.4 18.4 11 20.4 12.4C18.4 13.8 19.4 18.6 17.4 18.6" fill="none" stroke="#333" stroke-width="1.1"/><path d="M8 11l4.4 -2l4.4 2v5l-4.4 2.2l-4.4 -2.2zM8 11l4.4 2l4.4 -2M12.4 13v5" fill="#fff" stroke="#333" stroke-width=".9" stroke-linejoin="round"/><path d="M1 1.6h8.6M1 4.2h8.6M1 6.8h8.6M1 9.4h8.6M1 1.6v7.8M3.9 1.6v7.8M6.7 1.6v7.8M9.6 1.6v7.8" stroke="#333" stroke-width="1.3" fill="none"/></svg><svg class="a" style="left:1893.5px;top:537.5px;" width="22" height="22" viewBox="0 0 22 22"><path d="M1 1.6h8.6M1 4.2h8.6M1 6.8h8.6M1 9.4h8.6M1 1.6v7.8M3.9 1.6v7.8M6.7 1.6v7.8M9.6 1.6v7.8" stroke="#222" stroke-width="1.3" fill="none"/><path d="M3.4 9.4Q.6 14.6 3.4 20M18.6 8Q21.6 14 18.6 20" fill="none" stroke="#222" stroke-width="1.5"/><text x="11.4" y="18.6" font-size="15" font-style="italic" font-weight="700" text-anchor="middle" font-family="Liberation Serif,serif" fill="#222">x</text></svg><div class="a" style="left:1893px;top:581px;width:24.5px;height:24px;background:#d9d9d9;border-radius:3px;"></div><svg class="a" style="left:1894.3px;top:582px;" width="22" height="22" viewBox="0 0 22 22"><path d="M7 1V5.6M11 .4V5.6M15 1V5.6" stroke="#4b7bd0" stroke-width="1.3"/><path d="M9.6 2l1.4 -1.6l1.4 1.6" fill="none" stroke="#222" stroke-width="1"/><path d="M2 7.6L19.6 5.8L20.4 16.6L3 18.8Z" fill="#2e2e2e"/><path d="M.6 10l1.6 -.2v4.4l-1.6 .2zM20.2 9l1.4 -.2v4.2l-1.4 .2z" fill="#2e2e2e"/><circle cx="7.6" cy="12" r="2.9" fill="#fff"/><circle cx="14.6" cy="11.2" r="2.9" fill="#fff"/><path d="M6.4 10.6l2.6 1.4l-2.6 1.4z" fill="#2f6fbf"/><path d="M13.2 10.2h3l-1.5 2.4z" fill="#2f6fbf"/><path d="M9.6 16.4Q12.6 16.6 13.6 14.6" fill="none" stroke="#fff" stroke-width=".9"/></svg><div class="a" style="left:1894.4px;top:615.7px;width:21.4px;height:20.2px;background:#4caf50;border-radius:1.5px;"></div><svg class="a" style="left:1895.1px;top:615.8px;" width="20" height="20" viewBox="0 0 20 20"><path d="M2.6 4.4C5.6 3.6 8 4 10 5.6V16.4C8 15 5.6 14.6 2.6 15.4ZM17.4 4.4C14.4 3.6 12 4 10 5.6V16.4C12 15 14.4 14.6 17.4 15.4Z" fill="#fff"/><path d="M10 5.6V16.4" stroke="#4caf50" stroke-width="1"/></svg><div class="a" style="left:1894.4px;top:649px;width:21.4px;height:20.2px;background:#1559c0;border:1.2px solid #1d2f55;border-radius:1.5px;"></div><svg class="a" style="left:1895.1px;top:649.1px;" width="20" height="20" viewBox="0 0 20 20"><path d="M2.6 4.4C5.6 3.6 8 4 10 5.6V16.4C8 15 5.6 14.6 2.6 15.4ZM17.4 4.4C14.4 3.6 12 4 10 5.6V16.4C12 15 14.4 14.6 17.4 15.4Z" fill="#fff"/><path d="M10 5.6V16.4" stroke="#1559c0" stroke-width="1"/></svg>
<!-- 80_viewcube -->
<svg class="a" style="left:0;top:0" width="1920" height="1080" viewBox="0 0 1920 1080"><path d="M1821.7 100.6L1829.7 91.2L1837.7 100.6Z" fill="#9e9e9e"/>
<path d="M1821.7 231L1837.7 231L1829.7 240.4Z" fill="#9e9e9e"/>
<path d="M1764.6 158.4V173.2L1755.2 165.8Z" fill="#9e9e9e"/>
<path d="M1895.4 158.4V173.2L1904.8 165.8Z" fill="#9e9e9e"/>
<path d="M1809.4 102.6Q1792.6 107.6 1782 120" fill="none" stroke="#9e9e9e" stroke-width="4.6"/><path d="M1776 124.8L1777.6 111.6L1788.6 123.6Z" fill="#9e9e9e"/>
<path d="M1851 102.6Q1867.8 107.6 1878.4 120" fill="none" stroke="#9e9e9e" stroke-width="4.6"/><path d="M1884.4 124.8L1882.8 111.6L1871.8 123.6Z" fill="#9e9e9e"/>
<path d="M1796 138L1821 125.5L1862.5 137.5L1865.5 186L1838.5 206L1799 194Z" fill="#e6eaec" stroke="#e0e4e6" stroke-width="5" stroke-linejoin="round"/>
<path d="M1803.5 139.5L1822.5 130L1855 139.5L1838.5 150.5Z" fill="#fff" stroke="#fff" stroke-width="5" stroke-linejoin="round"/>
<path d="M1800.5 153.5L1833 162.5L1834.5 197L1802 187.5Z" fill="#fff" stroke="#fff" stroke-width="5" stroke-linejoin="round"/>
<path d="M1845.5 159L1862 146L1863.5 180.5L1847 195.5Z" fill="#fff" stroke="#fff" stroke-width="5" stroke-linejoin="round"/>
<circle cx="1798" cy="146.5" r="4" fill="#fff"/><circle cx="1839.5" cy="158" r="5" fill="#fff"/><circle cx="1837.5" cy="203" r="4" fill="#fff"/><circle cx="1864.5" cy="141" r="3.4" fill="#fff"/>
<path d="M1819.5 150V168" stroke="#f4f6f6" stroke-width="1.2"/>
<path d="M1788.3 197.5V147.5" stroke="#3c3ccc" stroke-width="1.3"/><path d="M1788.3 197.5L1839.3 212.5" stroke="#d8383e" stroke-width="1.3"/><path d="M1788.3 197.5L1808 181.5" stroke="#49b549" stroke-width="1"/>
<text x="1784.3" y="141.6" font-size="11.5" fill="#5d5de0">Z</text><text x="1844.3" y="218.6" font-size="11.5" fill="#e2596a">X</text><text x="1818.6" y="170.6" font-size="10.5" fill="#b5e0b5">Y</text>
<text transform="matrix(.96 .28 0 1 1802.4 177.4)" font-size="11.6" fill="#222" letter-spacing="-.2">Front</text>
<text transform="matrix(.92 .36 -.55 .5 1823.5 138.6)" font-size="11.5" fill="#222">Top</text>
<text transform="matrix(.56 -.66 .1 .95 1849 184)" font-size="11.5" fill="#222">Right</text>
<path d="M1875.3 223L1883.6 226.4V236.6L1875.3 240.6L1867 236.6V226.4Z" fill="#f6f6f6" stroke="#333" stroke-width="1.1" stroke-linejoin="round"/><path d="M1867 226.4L1875.3 229.8V240.6L1867 236.6Z" fill="#9c9c9c" stroke="#333" stroke-width=".9"/><path d="M1875.3 229.8L1883.6 226.4" stroke="#333" stroke-width=".9"/>
<path d="M1891.6 229.6H1900L1895.8 234.2Z" fill="#222"/></svg>
</div>
</body></html>
